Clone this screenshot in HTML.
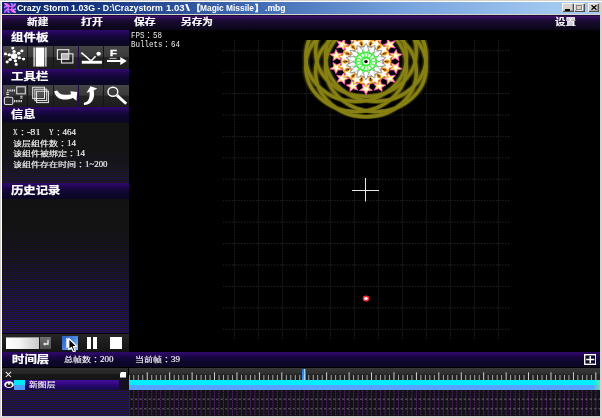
<!DOCTYPE html>
<html lang="zh"><head><meta charset="utf-8"><title>Crazy Storm 1.03G</title>
<style>
html,body{margin:0;padding:0;background:#000;}
body{width:602px;height:418px;overflow:hidden;position:relative;}
#w{position:absolute;left:0;top:0;width:602px;height:418px;overflow:hidden;}
.t{position:absolute;white-space:pre;transform-origin:0 0;display:block;}
</style></head><body><div id="w">
<div style="position:absolute;left:0px;top:0px;width:602px;height:418px;background:#d6d3ce;"></div>
<div style="position:absolute;left:0px;top:1px;width:602px;height:1px;background:#ffffff;"></div>
<div style="position:absolute;left:0.8px;top:1px;width:1.2px;height:416px;background:#ffffff;"></div>
<div style="position:absolute;left:2px;top:2px;width:598px;height:11.5px;background:linear-gradient(90deg,#0a246a 0%,#12307a 12%,#3f6ab2 42%,#78a4de 68%,#a2c8f0 92%,#a6caf0 100%);"></div>
<div style="position:absolute;left:2px;top:14.5px;width:598px;height:401.5px;background:#000;"></div>
<svg style="position:absolute;left:3.6px;top:3px" width="12.4" height="10" viewBox="0 0 16 16" preserveAspectRatio="none">
<rect width="16" height="16" fill="#2c2a9c"/>
<g fill="none" stroke-linecap="round">
<path d="M8 8 C5 5 2 5 0.5 7" stroke="#c070ff" stroke-width="2.4"/>
<path d="M8 8 C7 4 4 2 1.5 1" stroke="#ff60e8" stroke-width="2.6"/>
<path d="M8 8 C11 5 11 2 9.5 0.5" stroke="#8f7cff" stroke-width="2.4"/>
<path d="M8 8 C12 7 14 4 15 1.5" stroke="#e458f0" stroke-width="2.4"/>
<path d="M8 8 C11 11 14 11 15.5 9" stroke="#b884ff" stroke-width="2.4"/>
<path d="M8 8 C9 12 12 14 14.5 15" stroke="#ff60e8" stroke-width="2.6"/>
<path d="M8 8 C5 11 5 14 6.5 15.5" stroke="#8f7cff" stroke-width="2.4"/>
<path d="M8 8 C4 9 2 12 1 14.5" stroke="#d860f0" stroke-width="2.4"/>
<path d="M2 2.5 L4 4.5 M12 12 L14 13.5 M12.5 3 L13.5 2" stroke="#ffffff" stroke-width="1.2" opacity=".75"/>
</g>
<circle cx="8" cy="8" r="1.5" fill="#241070"/>
</svg>
<span id="ti1" class="t" style="left:17.4px;top:2.9px;font:bold 8.5px/11.5px 'Liberation Sans','Noto Sans CJK SC',sans-serif;color:#fff;transform:scale(1.0322,1.0000);">Crazy Storm 1.03G - D:\Crazystorm</span>
<span id="ti2" class="t" style="left:166.0px;top:2.9px;font:bold 8.5px/11.5px 'Liberation Sans','Noto Sans CJK SC',sans-serif;color:#fff;transform:scale(1.1241,1.0000);">1.03</span>
<span id="ti2b" class="t" style="left:184.7px;top:2.9px;font:bold 8.5px/11.5px 'Liberation Sans','Noto Sans CJK SC',sans-serif;color:#fff;transform:scale(2.1895,1.0000);">\</span>
<span id="ti3" class="t" style="left:191.8px;top:2.9px;font:bold 8.5px/11.5px 'Liberation Sans','Noto Sans CJK SC',sans-serif;color:#fff;transform:scale(0.9629,1.0000);-webkit-text-stroke:0.5px #fff;">【</span>
<span id="ti4" class="t" style="left:200.4px;top:2.9px;font:bold 8.5px/11.5px 'Liberation Sans','Noto Sans CJK SC',sans-serif;color:#fff;transform:scale(0.9852,1.0000);">Magic Missile</span>
<span id="ti5" class="t" style="left:254.5px;top:2.9px;font:bold 8.5px/11.5px 'Liberation Sans','Noto Sans CJK SC',sans-serif;color:#fff;transform:scale(0.9629,1.0000);-webkit-text-stroke:0.5px #fff;">】</span>
<span id="ti6" class="t" style="left:265.4px;top:2.9px;font:bold 8.5px/11.5px 'Liberation Sans','Noto Sans CJK SC',sans-serif;color:#fff;transform:scale(1.0142,1.0000);">.mbg</span>
<div style="position:absolute;left:562.3px;top:3.2px;width:11.3px;height:9.3px;background:#d6d3ce;box-shadow:inset 0.8px 0.8px 0 #fff, inset -0.8px -0.8px 0 #404040, inset -1.6px -1.6px 0 #808080;"><div style="position:absolute;left:3px;top:6px;width:4.5px;height:1.4px;background:#000"></div></div>
<div style="position:absolute;left:573.8px;top:3.2px;width:11.3px;height:9.3px;background:#d6d3ce;box-shadow:inset 0.8px 0.8px 0 #fff, inset -0.8px -0.8px 0 #404040, inset -1.6px -1.6px 0 #808080;"><div style="position:absolute;left:2.6px;top:2px;width:5.6px;height:4.6px;border:0.8px solid #8a8782;border-top-width:1.5px;box-sizing:border-box;box-shadow:0.7px 0.7px 0 #fff"></div></div>
<div style="position:absolute;left:587.8px;top:3.2px;width:11.3px;height:9.3px;background:#d6d3ce;box-shadow:inset 0.8px 0.8px 0 #fff, inset -0.8px -0.8px 0 #404040, inset -1.6px -1.6px 0 #808080;"><svg style="position:absolute;left:2.8px;top:2.2px" width="6" height="5" viewBox="0 0 6 5"><path d="M0.5 0.3 L5.5 4.7 M5.5 0.3 L0.5 4.7" stroke="#000" stroke-width="1.3"/></svg></div>
<div style="position:absolute;left:2px;top:14.5px;width:598px;height:15px;background:linear-gradient(180deg,#000 0%,#3a1266 6%,#35105e 18%,#1c0c3a 40%,#120a28 70%,#0c0818 100%);"></div>
<div style="position:absolute;left:2px;top:17px;width:598px;height:12.5px;background-image:repeating-conic-gradient(rgba(0,0,0,.28) 0% 25%, rgba(0,0,0,0) 0% 50%);background-size:2px 2px;opacity:0.8;"></div>
<span id="m1" class="t" style="left:27px;top:16.6px;font:bold 11px/13px 'Liberation Sans','Noto Sans CJK SC',sans-serif;color:#fbfbfb;transform:scale(0.9682,0.8000);-webkit-text-stroke:0.25px #fbfbfb;">新建</span>
<span id="m2" class="t" style="left:81px;top:16.6px;font:bold 11px/13px 'Liberation Sans','Noto Sans CJK SC',sans-serif;color:#fbfbfb;transform:scale(0.9909,0.8000);-webkit-text-stroke:0.25px #fbfbfb;">打开</span>
<span id="m3" class="t" style="left:133.6px;top:16.6px;font:bold 11px/13px 'Liberation Sans','Noto Sans CJK SC',sans-serif;color:#fbfbfb;transform:scale(0.9818,0.8000);-webkit-text-stroke:0.25px #fbfbfb;">保存</span>
<span id="m4" class="t" style="left:181.4px;top:16.6px;font:bold 11px/13px 'Liberation Sans','Noto Sans CJK SC',sans-serif;color:#fbfbfb;transform:scale(0.9697,0.8000);-webkit-text-stroke:0.25px #fbfbfb;">另存为</span>
<span id="m5" class="t" style="left:555.4px;top:16.6px;font:bold 11px/13px 'Liberation Sans','Noto Sans CJK SC',sans-serif;color:#fbfbfb;transform:scale(0.9455,0.8000);-webkit-text-stroke:0.25px #fbfbfb;">设置</span>
<div style="position:absolute;left:2px;top:29.5px;width:127px;height:322px;background:#100a20;"></div>
<div style="position:absolute;left:2px;top:29.6px;width:127px;height:16.3px;background:linear-gradient(180deg,#2e086a 0%,#26085a 20%,#170842 42%,#0f0832 66%,#0a0826 100%);"></div>
<div style="position:absolute;left:2px;top:32.6px;width:127px;height:13.3px;background-image:repeating-conic-gradient(rgba(0,0,0,.28) 0% 25%, rgba(0,0,0,0) 0% 50%);background-size:2px 2px;opacity:0.7;"></div>
<span id="h1" class="t" style="left:11px;top:33.0px;font:bold 12.5px/13px 'Liberation Sans','Noto Sans CJK SC',sans-serif;color:#fff;transform:scale(0.9969,0.8100);-webkit-text-stroke:0.3px #fff;">组件板</span>
<div style="position:absolute;left:2px;top:68.6px;width:127px;height:16px;background:linear-gradient(180deg,#2e086a 0%,#26085a 20%,#170842 42%,#0f0832 66%,#0a0826 100%);"></div>
<div style="position:absolute;left:2px;top:71.6px;width:127px;height:13px;background-image:repeating-conic-gradient(rgba(0,0,0,.28) 0% 25%, rgba(0,0,0,0) 0% 50%);background-size:2px 2px;opacity:0.7;"></div>
<span id="h2" class="t" style="left:11px;top:72.0px;font:bold 12.5px/13px 'Liberation Sans','Noto Sans CJK SC',sans-serif;color:#fff;transform:scale(0.9969,0.8100);-webkit-text-stroke:0.3px #fff;">工具栏</span>
<div style="position:absolute;left:2px;top:106.7px;width:127px;height:15.8px;background:linear-gradient(180deg,#2e086a 0%,#26085a 20%,#170842 42%,#0f0832 66%,#0a0826 100%);"></div>
<div style="position:absolute;left:2px;top:109.7px;width:127px;height:12.8px;background-image:repeating-conic-gradient(rgba(0,0,0,.28) 0% 25%, rgba(0,0,0,0) 0% 50%);background-size:2px 2px;opacity:0.7;"></div>
<span id="h3" class="t" style="left:11px;top:110.10000000000001px;font:bold 12.5px/13px 'Liberation Sans','Noto Sans CJK SC',sans-serif;color:#fff;transform:scale(0.9834,0.8100);-webkit-text-stroke:0.3px #fff;">信息</span>
<div style="position:absolute;left:2px;top:182.8px;width:127px;height:15.8px;background:linear-gradient(180deg,#2e086a 0%,#26085a 20%,#170842 42%,#0f0832 66%,#0a0826 100%);"></div>
<div style="position:absolute;left:2px;top:185.8px;width:127px;height:12.8px;background-image:repeating-conic-gradient(rgba(0,0,0,.28) 0% 25%, rgba(0,0,0,0) 0% 50%);background-size:2px 2px;opacity:0.7;"></div>
<span id="h4" class="t" style="left:11px;top:186.20000000000002px;font:bold 12.5px/13px 'Liberation Sans','Noto Sans CJK SC',sans-serif;color:#fff;transform:scale(0.9897,0.8100);-webkit-text-stroke:0.3px #fff;">历史记录</span>
<div style="position:absolute;left:2px;top:45.9px;width:127px;height:22.7px;background:#1e0848;"></div>
<div style="position:absolute;left:2.5px;top:45.9px;width:24.900000000000002px;height:22.7px;background:linear-gradient(180deg,#454545 0%,#3a3a3a 46%,#242424 50%,#1c1c1c 100%);"></div>
<div style="position:absolute;left:28.400000000000002px;top:45.9px;width:24.3px;height:22.7px;background:linear-gradient(180deg,#454545 0%,#3a3a3a 46%,#242424 50%,#1c1c1c 100%);"></div>
<div style="position:absolute;left:53.7px;top:45.9px;width:24.299999999999997px;height:22.7px;background:linear-gradient(180deg,#454545 0%,#3a3a3a 46%,#242424 50%,#1c1c1c 100%);"></div>
<div style="position:absolute;left:79.0px;top:45.9px;width:24.299999999999997px;height:22.7px;background:linear-gradient(180deg,#454545 0%,#3a3a3a 46%,#242424 50%,#1c1c1c 100%);"></div>
<div style="position:absolute;left:104.3px;top:45.9px;width:24.299999999999997px;height:22.7px;background:linear-gradient(180deg,#454545 0%,#3a3a3a 46%,#242424 50%,#1c1c1c 100%);"></div>
<div style="position:absolute;left:2px;top:84.6px;width:127px;height:22.1px;background:#1e0848;"></div>
<div style="position:absolute;left:2.5px;top:84.6px;width:24.900000000000002px;height:22.1px;background:linear-gradient(180deg,#454545 0%,#3a3a3a 46%,#242424 50%,#1c1c1c 100%);"></div>
<div style="position:absolute;left:28.400000000000002px;top:84.6px;width:24.3px;height:22.1px;background:linear-gradient(180deg,#454545 0%,#3a3a3a 46%,#242424 50%,#1c1c1c 100%);"></div>
<div style="position:absolute;left:53.7px;top:84.6px;width:24.299999999999997px;height:22.1px;background:linear-gradient(180deg,#454545 0%,#3a3a3a 46%,#242424 50%,#1c1c1c 100%);"></div>
<div style="position:absolute;left:79.0px;top:84.6px;width:24.299999999999997px;height:22.1px;background:linear-gradient(180deg,#454545 0%,#3a3a3a 46%,#242424 50%,#1c1c1c 100%);"></div>
<div style="position:absolute;left:104.3px;top:84.6px;width:24.299999999999997px;height:22.1px;background:linear-gradient(180deg,#454545 0%,#3a3a3a 46%,#242424 50%,#1c1c1c 100%);"></div>
<svg style="position:absolute;left:0;top:0" width="130" height="110" viewBox="0 0 130 110"><line x1="14.1" y1="56.1" x2="12.8" y2="48.1" stroke="#bdbdbd" stroke-width="0.7" opacity=".7"/><line x1="14.1" y1="56.1" x2="21.9" y2="50.9" stroke="#bdbdbd" stroke-width="0.7" opacity=".7"/><line x1="14.1" y1="56.1" x2="23.6" y2="59.1" stroke="#bdbdbd" stroke-width="0.7" opacity=".7"/><line x1="14.1" y1="56.1" x2="16.2" y2="64.5" stroke="#bdbdbd" stroke-width="0.7" opacity=".7"/><line x1="14.1" y1="56.1" x2="7.2" y2="62.0" stroke="#bdbdbd" stroke-width="0.7" opacity=".7"/><line x1="14.1" y1="56.1" x2="5.5" y2="53.9" stroke="#bdbdbd" stroke-width="0.7" opacity=".7"/><ellipse cx="14.1" cy="51.6" rx="1.7" ry="1.5" fill="#fff"/><ellipse cx="12.8" cy="48.1" rx="1.6" ry="1.4" fill="#fff"/><ellipse cx="18.8" cy="53.3" rx="1.7" ry="1.5" fill="#fff"/><ellipse cx="21.9" cy="50.9" rx="1.6" ry="1.4" fill="#fff"/><ellipse cx="19.3" cy="57.8" rx="1.7" ry="1.5" fill="#fff"/><ellipse cx="23.6" cy="59.1" rx="1.6" ry="1.4" fill="#fff"/><ellipse cx="15.4" cy="60.8" rx="1.7" ry="1.5" fill="#fff"/><ellipse cx="16.2" cy="64.5" rx="1.6" ry="1.4" fill="#fff"/><ellipse cx="10.2" cy="59.4" rx="1.7" ry="1.5" fill="#fff"/><ellipse cx="7.2" cy="62.0" rx="1.6" ry="1.4" fill="#fff"/><ellipse cx="9.3" cy="54.8" rx="1.7" ry="1.5" fill="#fff"/><ellipse cx="5.5" cy="53.9" rx="1.6" ry="1.4" fill="#fff"/><ellipse cx="14.1" cy="56.1" rx="3.2" ry="2.9" fill="#fff"/><rect x="35.7" y="47.5" width="8.6" height="19.1" fill="#fff"/><rect x="33.5" y="47.5" width="1.2" height="19.1" fill="#fff"/><rect x="45.3" y="47.5" width="1.2" height="19.1" fill="#fff"/><rect x="61" y="53.3" width="7.8" height="6" fill="#b4b4b4"/><rect x="57.4" y="49.7" width="11.4" height="9.6" fill="none" stroke="#e8e8e8" stroke-width="1.1"/><rect x="61.5" y="53.8" width="11.4" height="9.2" fill="none" stroke="#e8e8e8" stroke-width="1.1"/><rect x="81.8" y="60.8" width="20.1" height="2.9" fill="#fff"/><path d="M81.3 52.6 L91 60.9 L95.6 56.2" fill="none" stroke="#fff" stroke-width="1.5" stroke-linejoin="miter"/><ellipse cx="98.6" cy="53.7" rx="2.2" ry="2" fill="#fff"/><rect x="109.4" y="57.9" width="7.2" height="0.9" fill="#d4d4d4"/><path d="M107 59.9 H120.3 V57 L126.8 60.9 L120.3 64.9 V61.9 H107 Z" fill="#fff"/><rect x="16.7" y="86.8" width="8.6" height="7" fill="#3c3c3c" stroke="#d8d8d8" stroke-width="1.1"/><rect x="4.4" y="97.2" width="8.4" height="7.3" rx="1.2" fill="#303030" stroke="#d8d8d8" stroke-width="1.1"/><path d="M7.2 90.5 H15" stroke="#e6e6e6" stroke-width="2.2" stroke-dasharray="1.3 0.9" fill="none"/><path d="M7.6 92.3 V96.4" stroke="#e6e6e6" stroke-width="2.4" stroke-dasharray="1 0.8" fill="none"/><path d="M14 101.2 H22.4" stroke="#e6e6e6" stroke-width="2.2" stroke-dasharray="1.3 0.9" fill="none"/><path d="M21.4 95.8 V99.4" stroke="#e6e6e6" stroke-width="2.4" stroke-dasharray="1 0.8" fill="none"/><rect x="36.6" y="91" width="7.8" height="6.6" fill="#5a5a5a" opacity=".8"/><rect x="32.7" y="87.2" width="11.8" height="11.4" fill="none" stroke="#ececec" stroke-width="1"/><rect x="34.9" y="89.2" width="11.8" height="11.4" fill="none" stroke="#ececec" stroke-width="1"/><rect x="36.6" y="91.2" width="11.8" height="11.4" fill="none" stroke="#ececec" stroke-width="1"/><path d="M54.3 91.2 L57.4 90.4 C58.6 94 63.5 95.8 71 94.3 L70.4 91.3 L77.1 92 L76.5 100.7 L72.9 98.1 C63.5 101.6 55.4 98.9 54.3 91.2 Z" fill="#fff"/><path d="M83.9 102.7 C88.3 102.2 90 98 89.6 92 L86.5 92.8 L90.6 86.2 L97.3 88.6 L93.7 90.6 C95.5 99.4 91 105.1 83.9 105.1 Z" fill="#fff"/><ellipse cx="112.9" cy="91.7" rx="4.9" ry="4.5" fill="none" stroke="#fff" stroke-width="1.4"/><path d="M117 95.4 L126.2 103.8" stroke="#fff" stroke-width="2.9" stroke-linecap="butt"/></svg>
<span id="ficon" class="t" style="left:109.5px;top:47.7px;font:bold 10.6px/11px 'Liberation Sans','Noto Sans CJK SC',sans-serif;color:#fff;transform:scale(1.0641,0.9400);-webkit-text-stroke:0.4px #fff;">F</span>
<div style="position:absolute;left:2px;top:122.5px;width:127px;height:60.3px;background:linear-gradient(180deg,#131313 0%,#151515 60%,#1a1a1a 100%);"></div>
<div style="position:absolute;left:2px;top:150px;width:127px;height:32.8px;background-image:repeating-conic-gradient(#280a7c 0% 25%, rgba(0,0,0,0) 0% 50%);background-size:2px 2px;opacity:0.6;-webkit-mask-image:linear-gradient(180deg,rgba(0,0,0,0) 0%,rgba(0,0,0,.25) 50%,rgba(0,0,0,.8) 100%);mask-image:linear-gradient(180deg,rgba(0,0,0,0) 0%,rgba(0,0,0,.25) 50%,rgba(0,0,0,.8) 100%);"></div>
<div style="position:absolute;left:2px;top:198.7px;width:127px;height:134.5px;background:linear-gradient(180deg,#121212 0%,#141414 40%,#1b1b1b 100%);"></div>
<div style="position:absolute;left:2px;top:225px;width:127px;height:108.2px;background-image:repeating-conic-gradient(#2a0a84 0% 25%, rgba(0,0,0,0) 0% 50%);background-size:2px 2px;opacity:0.8;-webkit-mask-image:linear-gradient(180deg,rgba(0,0,0,0) 0%,rgba(0,0,0,.3) 35%,rgba(0,0,0,.75) 70%,rgba(0,0,0,1) 100%);mask-image:linear-gradient(180deg,rgba(0,0,0,0) 0%,rgba(0,0,0,.3) 35%,rgba(0,0,0,.75) 70%,rgba(0,0,0,1) 100%);"></div>
<div style="position:absolute;left:2px;top:333.2px;width:127px;height:1.3px;background:#050505;"></div>
<span id="i1_0" class="t" style="left:13px;top:128.4px;font:normal 9px/10.5px 'Liberation Serif','Noto Sans CJK SC',sans-serif;color:#f0f0f0;transform:scale(0.6923,0.8200);-webkit-text-stroke:0.2px #f0f0f0;">X</span>
<span id="i1_1" class="t" style="left:17.5px;top:128.4px;font:normal 9px/10.5px 'Liberation Serif','Noto Sans CJK SC',sans-serif;color:#f0f0f0;transform:scale(0.9983,0.8200);-webkit-text-stroke:0.2px #f0f0f0;"><span lang="ja" style="font-family:'Noto Sans CJK JP',sans-serif">：</span></span>
<span id="i1_2" class="t" style="left:26.5px;top:128.4px;font:normal 9px/10.5px 'Liberation Serif','Noto Sans CJK SC',sans-serif;color:#f0f0f0;transform:scale(1.1250,0.8200);-webkit-text-stroke:0.2px #f0f0f0;">-81</span>
<span id="i1_3" class="t" style="left:40.0px;top:128.4px;font:normal 9px/10.5px 'Liberation Serif','Noto Sans CJK SC',sans-serif;color:#f0f0f0;transform:scale(1.0000,0.8200);-webkit-text-stroke:0.2px #f0f0f0;"></span>
<span id="i1_4" class="t" style="left:49.0px;top:128.4px;font:normal 9px/10.5px 'Liberation Serif','Noto Sans CJK SC',sans-serif;color:#f0f0f0;transform:scale(0.6923,0.8200);-webkit-text-stroke:0.2px #f0f0f0;">Y</span>
<span id="i1_5" class="t" style="left:53.5px;top:128.4px;font:normal 9px/10.5px 'Liberation Serif','Noto Sans CJK SC',sans-serif;color:#f0f0f0;transform:scale(0.9983,0.8200);-webkit-text-stroke:0.2px #f0f0f0;"><span lang="ja" style="font-family:'Noto Sans CJK JP',sans-serif">：</span></span>
<span id="i1_6" class="t" style="left:62.5px;top:128.4px;font:normal 9px/10.5px 'Liberation Serif','Noto Sans CJK SC',sans-serif;color:#f0f0f0;transform:scale(1.0000,0.8200);-webkit-text-stroke:0.2px #f0f0f0;">464</span>
<span id="i2_0" class="t" style="left:13px;top:138.9px;font:normal 9px/10.5px 'Liberation Serif','Noto Sans CJK SC',sans-serif;color:#f0f0f0;transform:scale(0.9994,0.8200);-webkit-text-stroke:0.2px #f0f0f0;">该层组件数<span lang="ja" style="font-family:'Noto Sans CJK JP',sans-serif">：</span></span>
<span id="i2_1" class="t" style="left:67px;top:138.9px;font:normal 9px/10.5px 'Liberation Serif','Noto Sans CJK SC',sans-serif;color:#f0f0f0;transform:scale(1.0000,0.8200);-webkit-text-stroke:0.2px #f0f0f0;">14</span>
<span id="i3_0" class="t" style="left:13px;top:149.4px;font:normal 9px/10.5px 'Liberation Serif','Noto Sans CJK SC',sans-serif;color:#f0f0f0;transform:scale(0.9995,0.8200);-webkit-text-stroke:0.2px #f0f0f0;">该组件被绑定<span lang="ja" style="font-family:'Noto Sans CJK JP',sans-serif">：</span></span>
<span id="i3_1" class="t" style="left:76px;top:149.4px;font:normal 9px/10.5px 'Liberation Serif','Noto Sans CJK SC',sans-serif;color:#f0f0f0;transform:scale(1.0000,0.8200);-webkit-text-stroke:0.2px #f0f0f0;">14</span>
<span id="i4_0" class="t" style="left:13px;top:159.9px;font:normal 9px/10.5px 'Liberation Serif','Noto Sans CJK SC',sans-serif;color:#f0f0f0;transform:scale(0.9996,0.8200);-webkit-text-stroke:0.2px #f0f0f0;">该组件存在时间<span lang="ja" style="font-family:'Noto Sans CJK JP',sans-serif">：</span></span>
<span id="i4_1" class="t" style="left:85px;top:159.9px;font:normal 9px/10.5px 'Liberation Serif','Noto Sans CJK SC',sans-serif;color:#f0f0f0;transform:scale(0.9836,0.8200);-webkit-text-stroke:0.2px #f0f0f0;">1~200</span>
<div style="position:absolute;left:2px;top:334px;width:127px;height:18px;background:linear-gradient(180deg,#262626 0%,#1c1c1c 50%,#141414 100%);"></div>
<div style="position:absolute;left:5.8px;top:336.5px;width:33.4px;height:12px;background:linear-gradient(90deg,#ffffff 0%,#f4f4f4 40%,#c8c8c8 100%);box-shadow:inset 0 1px 0 #9a9a9a;"></div>
<div style="position:absolute;left:39.6px;top:336.5px;width:11.6px;height:12px;background:linear-gradient(180deg,#707070,#505050);"></div>
<svg style="position:absolute;left:41.5px;top:339px" width="8" height="8" viewBox="0 0 8 8"><path d="M6 0.8 V5 H2" fill="none" stroke="#f0f0f0" stroke-width="1.3"/><path d="M3.2 3.2 L1 5 L3.2 6.8 Z" fill="#f0f0f0"/></svg>
<div style="position:absolute;left:61.6px;top:336.3px;width:16.6px;height:13.8px;background:linear-gradient(135deg,#2a5cc8 0%,#4a86e0 50%,#9cc8f8 100%);"></div>
<svg style="position:absolute;left:61.6px;top:336.3px" width="19" height="18" viewBox="0 0 19 18"><path d="M4.3 1.8 L12.5 7 L4.3 12.2 Z" fill="#fff"/><path d="M6.8 2.5 L6.8 13.6 L9.4 11.4 L11.4 15.8 L13.4 14.9 L11.4 10.6 L14.8 10.4 Z" fill="#0a0a0a" stroke="#fff" stroke-width="1.2" stroke-linejoin="round"/></svg>
<div style="position:absolute;left:87.2px;top:337px;width:4.2px;height:12.2px;background:#fff;"></div>
<div style="position:absolute;left:93.1px;top:337px;width:4.2px;height:12.2px;background:#fff;"></div>
<div style="position:absolute;left:109.8px;top:337px;width:12.3px;height:12.2px;background:#fff;"></div>
<div style="position:absolute;left:2px;top:351.7px;width:598px;height:15.8px;background:linear-gradient(180deg,#2e086a 0%,#26085a 20%,#170842 42%,#0f0832 66%,#0a0826 100%);"></div>
<div style="position:absolute;left:2px;top:354.7px;width:598px;height:12.8px;background-image:repeating-conic-gradient(rgba(0,0,0,.28) 0% 25%, rgba(0,0,0,0) 0% 50%);background-size:2px 2px;opacity:0.7;"></div>
<span id="h5" class="t" style="left:11.7px;top:355.09999999999997px;font:bold 12.5px/13px 'Liberation Sans','Noto Sans CJK SC',sans-serif;color:#fff;transform:scale(0.9916,0.8100);-webkit-text-stroke:0.3px #fff;">时间层</span>
<span id="t1" class="t" style="left:63.6px;top:354.7px;font:normal 9px/10.5px 'Liberation Serif','Noto Sans CJK SC',sans-serif;color:#f0f0f0;transform:scale(0.9974,0.8200);-webkit-text-stroke:0.2px #f0f0f0;">总帧数<span lang="ja" style="font-family:'Noto Sans CJK JP',sans-serif">：</span>200</span>
<span id="t2" class="t" style="left:135px;top:354.7px;font:normal 9px/10.5px 'Liberation Serif','Noto Sans CJK SC',sans-serif;color:#f0f0f0;transform:scale(0.9993,0.8200);-webkit-text-stroke:0.2px #f0f0f0;">当前帧<span lang="ja" style="font-family:'Noto Sans CJK JP',sans-serif">：</span>39</span>
<svg style="position:absolute;left:583.5px;top:353.8px" width="12.5" height="11" viewBox="0 0 12.5 11"><rect x="0.7" y="0.7" width="11.1" height="9.6" fill="#0c0a2c" stroke="#fff" stroke-width="1.4"/><path d="M6.25 2 V9 M2.2 5.5 H10.3" stroke="#fff" stroke-width="1.5"/></svg>
<div style="position:absolute;left:2px;top:368px;width:126px;height:12px;background:linear-gradient(180deg,#2e2e2e 0%,#262626 48%,#181818 52%,#141414 100%);"></div>
<div style="position:absolute;left:128px;top:368px;width:1px;height:12px;background:#000;"></div>
<div style="position:absolute;left:129px;top:368px;width:471px;height:12px;background:linear-gradient(180deg,#383838 0%,#303030 45%,#242424 55%,#202020 100%);"></div>
<svg style="position:absolute;left:5px;top:370.6px" width="7" height="7" viewBox="0 0 7 7"><path d="M0.8 0.8 L6 6 M6 0.8 L0.8 6" stroke="#f4f4f4" stroke-width="1.05"/></svg>
<svg style="position:absolute;left:120.3px;top:371.6px" width="6" height="6" viewBox="0 0 6 6"><path d="M1.2 0 H6 V5.6 H0 V1.2 Z" fill="#fff"/></svg>
<svg style="position:absolute;left:129px;top:368px" width="471" height="12" viewBox="0 0 471 12" shape-rendering="auto"><rect x="-0.15" y="7" width="0.9" height="5" fill="#b4b4b4"/><rect x="4.34" y="7" width="0.9" height="5" fill="#b4b4b4"/><rect x="8.82" y="7" width="0.9" height="5" fill="#b4b4b4"/><rect x="13.31" y="7" width="0.9" height="5" fill="#b4b4b4"/><rect x="17.79" y="4.4" width="0.9" height="7.6" fill="#e4e4e4"/><rect x="22.28" y="7" width="0.9" height="5" fill="#b4b4b4"/><rect x="26.77" y="7" width="0.9" height="5" fill="#b4b4b4"/><rect x="31.25" y="7" width="0.9" height="5" fill="#b4b4b4"/><rect x="35.74" y="7" width="0.9" height="5" fill="#b4b4b4"/><rect x="40.22" y="4.4" width="0.9" height="7.6" fill="#e4e4e4"/><rect x="44.71" y="7" width="0.9" height="5" fill="#b4b4b4"/><rect x="49.20" y="7" width="0.9" height="5" fill="#b4b4b4"/><rect x="53.68" y="7" width="0.9" height="5" fill="#b4b4b4"/><rect x="58.17" y="7" width="0.9" height="5" fill="#b4b4b4"/><rect x="62.65" y="4.4" width="0.9" height="7.6" fill="#e4e4e4"/><rect x="67.14" y="7" width="0.9" height="5" fill="#b4b4b4"/><rect x="71.63" y="7" width="0.9" height="5" fill="#b4b4b4"/><rect x="76.11" y="7" width="0.9" height="5" fill="#b4b4b4"/><rect x="80.60" y="7" width="0.9" height="5" fill="#b4b4b4"/><rect x="85.08" y="4.4" width="0.9" height="7.6" fill="#e4e4e4"/><rect x="89.57" y="7" width="0.9" height="5" fill="#b4b4b4"/><rect x="94.06" y="7" width="0.9" height="5" fill="#b4b4b4"/><rect x="98.54" y="7" width="0.9" height="5" fill="#b4b4b4"/><rect x="103.03" y="7" width="0.9" height="5" fill="#b4b4b4"/><rect x="107.51" y="4.4" width="0.9" height="7.6" fill="#e4e4e4"/><rect x="112.00" y="7" width="0.9" height="5" fill="#b4b4b4"/><rect x="116.49" y="7" width="0.9" height="5" fill="#b4b4b4"/><rect x="120.97" y="7" width="0.9" height="5" fill="#b4b4b4"/><rect x="125.46" y="7" width="0.9" height="5" fill="#b4b4b4"/><rect x="129.94" y="4.4" width="0.9" height="7.6" fill="#e4e4e4"/><rect x="134.43" y="7" width="0.9" height="5" fill="#b4b4b4"/><rect x="138.92" y="7" width="0.9" height="5" fill="#b4b4b4"/><rect x="143.40" y="7" width="0.9" height="5" fill="#b4b4b4"/><rect x="147.89" y="7" width="0.9" height="5" fill="#b4b4b4"/><rect x="152.37" y="4.4" width="0.9" height="7.6" fill="#e4e4e4"/><rect x="156.86" y="7" width="0.9" height="5" fill="#b4b4b4"/><rect x="161.35" y="7" width="0.9" height="5" fill="#b4b4b4"/><rect x="165.83" y="7" width="0.9" height="5" fill="#b4b4b4"/><rect x="170.32" y="7" width="0.9" height="5" fill="#b4b4b4"/><rect x="174.80" y="4.4" width="0.9" height="7.6" fill="#e4e4e4"/><rect x="179.29" y="7" width="0.9" height="5" fill="#b4b4b4"/><rect x="183.78" y="7" width="0.9" height="5" fill="#b4b4b4"/><rect x="188.26" y="7" width="0.9" height="5" fill="#b4b4b4"/><rect x="192.75" y="7" width="0.9" height="5" fill="#b4b4b4"/><rect x="197.23" y="4.4" width="0.9" height="7.6" fill="#e4e4e4"/><rect x="201.72" y="7" width="0.9" height="5" fill="#b4b4b4"/><rect x="206.21" y="7" width="0.9" height="5" fill="#b4b4b4"/><rect x="210.69" y="7" width="0.9" height="5" fill="#b4b4b4"/><rect x="215.18" y="7" width="0.9" height="5" fill="#b4b4b4"/><rect x="219.66" y="4.4" width="0.9" height="7.6" fill="#e4e4e4"/><rect x="224.15" y="7" width="0.9" height="5" fill="#b4b4b4"/><rect x="228.64" y="7" width="0.9" height="5" fill="#b4b4b4"/><rect x="233.12" y="7" width="0.9" height="5" fill="#b4b4b4"/><rect x="237.61" y="7" width="0.9" height="5" fill="#b4b4b4"/><rect x="242.09" y="4.4" width="0.9" height="7.6" fill="#e4e4e4"/><rect x="246.58" y="7" width="0.9" height="5" fill="#b4b4b4"/><rect x="251.07" y="7" width="0.9" height="5" fill="#b4b4b4"/><rect x="255.55" y="7" width="0.9" height="5" fill="#b4b4b4"/><rect x="260.04" y="7" width="0.9" height="5" fill="#b4b4b4"/><rect x="264.52" y="4.4" width="0.9" height="7.6" fill="#e4e4e4"/><rect x="269.01" y="7" width="0.9" height="5" fill="#b4b4b4"/><rect x="273.50" y="7" width="0.9" height="5" fill="#b4b4b4"/><rect x="277.98" y="7" width="0.9" height="5" fill="#b4b4b4"/><rect x="282.47" y="7" width="0.9" height="5" fill="#b4b4b4"/><rect x="286.95" y="4.4" width="0.9" height="7.6" fill="#e4e4e4"/><rect x="291.44" y="7" width="0.9" height="5" fill="#b4b4b4"/><rect x="295.93" y="7" width="0.9" height="5" fill="#b4b4b4"/><rect x="300.41" y="7" width="0.9" height="5" fill="#b4b4b4"/><rect x="304.90" y="7" width="0.9" height="5" fill="#b4b4b4"/><rect x="309.38" y="4.4" width="0.9" height="7.6" fill="#e4e4e4"/><rect x="313.87" y="7" width="0.9" height="5" fill="#b4b4b4"/><rect x="318.36" y="7" width="0.9" height="5" fill="#b4b4b4"/><rect x="322.84" y="7" width="0.9" height="5" fill="#b4b4b4"/><rect x="327.33" y="7" width="0.9" height="5" fill="#b4b4b4"/><rect x="331.81" y="4.4" width="0.9" height="7.6" fill="#e4e4e4"/><rect x="336.30" y="7" width="0.9" height="5" fill="#b4b4b4"/><rect x="340.79" y="7" width="0.9" height="5" fill="#b4b4b4"/><rect x="345.27" y="7" width="0.9" height="5" fill="#b4b4b4"/><rect x="349.76" y="7" width="0.9" height="5" fill="#b4b4b4"/><rect x="354.24" y="4.4" width="0.9" height="7.6" fill="#e4e4e4"/><rect x="358.73" y="7" width="0.9" height="5" fill="#b4b4b4"/><rect x="363.22" y="7" width="0.9" height="5" fill="#b4b4b4"/><rect x="367.70" y="7" width="0.9" height="5" fill="#b4b4b4"/><rect x="372.19" y="7" width="0.9" height="5" fill="#b4b4b4"/><rect x="376.67" y="4.4" width="0.9" height="7.6" fill="#e4e4e4"/><rect x="381.16" y="7" width="0.9" height="5" fill="#b4b4b4"/><rect x="385.65" y="7" width="0.9" height="5" fill="#b4b4b4"/><rect x="390.13" y="7" width="0.9" height="5" fill="#b4b4b4"/><rect x="394.62" y="7" width="0.9" height="5" fill="#b4b4b4"/><rect x="399.10" y="4.4" width="0.9" height="7.6" fill="#e4e4e4"/><rect x="403.59" y="7" width="0.9" height="5" fill="#b4b4b4"/><rect x="408.08" y="7" width="0.9" height="5" fill="#b4b4b4"/><rect x="412.56" y="7" width="0.9" height="5" fill="#b4b4b4"/><rect x="417.05" y="7" width="0.9" height="5" fill="#b4b4b4"/><rect x="421.53" y="4.4" width="0.9" height="7.6" fill="#e4e4e4"/><rect x="426.02" y="7" width="0.9" height="5" fill="#b4b4b4"/><rect x="430.51" y="7" width="0.9" height="5" fill="#b4b4b4"/><rect x="434.99" y="7" width="0.9" height="5" fill="#b4b4b4"/><rect x="439.48" y="7" width="0.9" height="5" fill="#b4b4b4"/><rect x="443.96" y="4.4" width="0.9" height="7.6" fill="#e4e4e4"/><rect x="448.45" y="7" width="0.9" height="5" fill="#b4b4b4"/><rect x="452.94" y="7" width="0.9" height="5" fill="#b4b4b4"/><rect x="457.42" y="7" width="0.9" height="5" fill="#b4b4b4"/><rect x="461.91" y="7" width="0.9" height="5" fill="#b4b4b4"/><rect x="466.39" y="4.4" width="0.9" height="7.6" fill="#e4e4e4"/></svg>
<div style="position:absolute;left:302.2px;top:368.5px;width:4.2px;height:11.5px;background:linear-gradient(180deg,#1e78e0,#3aa0ff);"></div>
<div style="position:absolute;left:303.8px;top:369px;width:1px;height:11px;background:#9fd4ff;"></div>
<div style="position:absolute;left:2px;top:380px;width:116.5px;height:10px;background:linear-gradient(180deg,#3f0c98 0%,#340a84 40%,#22096a 70%,#180a50 100%);"></div>
<div style="position:absolute;left:2px;top:384px;width:116.5px;height:6px;background-image:repeating-conic-gradient(rgba(0,0,0,.28) 0% 25%, rgba(0,0,0,0) 0% 50%);background-size:2px 2px;opacity:0.6;"></div>
<div style="position:absolute;left:118.5px;top:380px;width:10.5px;height:10px;background:#15101f;"></div>
<div style="position:absolute;left:129px;top:380.3px;width:471px;height:9.6px;background:linear-gradient(180deg,#00eeff 0%,#00eeff 53%,#55a4ff 55%,#55a4ff 100%);"></div>
<div style="position:absolute;left:593px;top:380.3px;width:7px;height:9.6px;background:linear-gradient(90deg,rgba(120,230,160,0),rgba(120,230,160,.75));"></div>
<svg style="position:absolute;left:3.8px;top:381.2px" width="10" height="7.4" viewBox="0 0 10 7.4"><ellipse cx="5" cy="3.7" rx="4.8" ry="3.4" fill="#fff"/><ellipse cx="5" cy="4" rx="2.9" ry="2.1" fill="#1a1a1a"/><ellipse cx="5" cy="2.9" rx="1.2" ry="0.8" fill="#fff"/></svg>
<div style="position:absolute;left:14px;top:380.3px;width:11px;height:4.9px;background:#00e8f8;"></div>
<div style="position:absolute;left:14px;top:385.2px;width:11px;height:4.6px;background:#4f9cf6;"></div>
<span id="layer" class="t" style="left:28.5px;top:380.3px;font:normal 9px/10.5px 'Liberation Serif','Noto Sans CJK SC',sans-serif;color:#f4f4f4;transform:scale(0.9809,0.8200);-webkit-text-stroke:0.2px #f0f0f0;">新图层</span>
<div style="position:absolute;left:2px;top:390px;width:127px;height:26px;background:#1b1b1b;"></div>
<div style="position:absolute;left:2px;top:390px;width:127px;height:26px;background-image:repeating-conic-gradient(#2a0a84 0% 25%, rgba(0,0,0,0) 0% 50%);background-size:2px 2px;opacity:0.68;"></div>
<div style="position:absolute;left:129px;top:390px;width:471px;height:26px;background:#141018;"></div>
<svg style="position:absolute;left:129px;top:390px" width="471" height="26" viewBox="0 0 471 26"><line x1="0.30" y1="0.5" x2="0.30" y2="26" stroke="#6a2a8c" stroke-width="1" stroke-dasharray="1.4 0.9" opacity=".85"/><line x1="4.79" y1="0.5" x2="4.79" y2="26" stroke="#6a2a8c" stroke-width="1" stroke-dasharray="1.4 0.9" opacity=".85"/><line x1="9.27" y1="0.5" x2="9.27" y2="26" stroke="#6a2a8c" stroke-width="1" stroke-dasharray="1.4 0.9" opacity=".85"/><line x1="13.76" y1="0.5" x2="13.76" y2="26" stroke="#6a2a8c" stroke-width="1" stroke-dasharray="1.4 0.9" opacity=".85"/><line x1="18.24" y1="0.5" x2="18.24" y2="26" stroke="#6a2a8c" stroke-width="1" stroke-dasharray="1.4 0.9" opacity=".85"/><line x1="22.73" y1="0.5" x2="22.73" y2="26" stroke="#6a2a8c" stroke-width="1" stroke-dasharray="1.4 0.9" opacity=".85"/><line x1="27.22" y1="0.5" x2="27.22" y2="26" stroke="#6a2a8c" stroke-width="1" stroke-dasharray="1.4 0.9" opacity=".85"/><line x1="31.70" y1="0.5" x2="31.70" y2="26" stroke="#6a2a8c" stroke-width="1" stroke-dasharray="1.4 0.9" opacity=".85"/><line x1="36.19" y1="0.5" x2="36.19" y2="26" stroke="#6a2a8c" stroke-width="1" stroke-dasharray="1.4 0.9" opacity=".85"/><line x1="40.67" y1="0.5" x2="40.67" y2="26" stroke="#6a2a8c" stroke-width="1" stroke-dasharray="1.4 0.9" opacity=".85"/><line x1="45.16" y1="0.5" x2="45.16" y2="26" stroke="#6a2a8c" stroke-width="1" stroke-dasharray="1.4 0.9" opacity=".85"/><line x1="49.65" y1="0.5" x2="49.65" y2="26" stroke="#6a2a8c" stroke-width="1" stroke-dasharray="1.4 0.9" opacity=".85"/><line x1="54.13" y1="0.5" x2="54.13" y2="26" stroke="#6a2a8c" stroke-width="1" stroke-dasharray="1.4 0.9" opacity=".85"/><line x1="58.62" y1="0.5" x2="58.62" y2="26" stroke="#6a2a8c" stroke-width="1" stroke-dasharray="1.4 0.9" opacity=".85"/><line x1="63.10" y1="0.5" x2="63.10" y2="26" stroke="#6a2a8c" stroke-width="1" stroke-dasharray="1.4 0.9" opacity=".85"/><line x1="67.59" y1="0.5" x2="67.59" y2="26" stroke="#6a2a8c" stroke-width="1" stroke-dasharray="1.4 0.9" opacity=".85"/><line x1="72.08" y1="0.5" x2="72.08" y2="26" stroke="#6a2a8c" stroke-width="1" stroke-dasharray="1.4 0.9" opacity=".85"/><line x1="76.56" y1="0.5" x2="76.56" y2="26" stroke="#6a2a8c" stroke-width="1" stroke-dasharray="1.4 0.9" opacity=".85"/><line x1="81.05" y1="0.5" x2="81.05" y2="26" stroke="#6a2a8c" stroke-width="1" stroke-dasharray="1.4 0.9" opacity=".85"/><line x1="85.53" y1="0.5" x2="85.53" y2="26" stroke="#6a2a8c" stroke-width="1" stroke-dasharray="1.4 0.9" opacity=".85"/><line x1="90.02" y1="0.5" x2="90.02" y2="26" stroke="#6a2a8c" stroke-width="1" stroke-dasharray="1.4 0.9" opacity=".85"/><line x1="94.51" y1="0.5" x2="94.51" y2="26" stroke="#6a2a8c" stroke-width="1" stroke-dasharray="1.4 0.9" opacity=".85"/><line x1="98.99" y1="0.5" x2="98.99" y2="26" stroke="#6a2a8c" stroke-width="1" stroke-dasharray="1.4 0.9" opacity=".85"/><line x1="103.48" y1="0.5" x2="103.48" y2="26" stroke="#6a2a8c" stroke-width="1" stroke-dasharray="1.4 0.9" opacity=".85"/><line x1="107.96" y1="0.5" x2="107.96" y2="26" stroke="#6a2a8c" stroke-width="1" stroke-dasharray="1.4 0.9" opacity=".85"/><line x1="112.45" y1="0.5" x2="112.45" y2="26" stroke="#6a2a8c" stroke-width="1" stroke-dasharray="1.4 0.9" opacity=".85"/><line x1="116.94" y1="0.5" x2="116.94" y2="26" stroke="#6a2a8c" stroke-width="1" stroke-dasharray="1.4 0.9" opacity=".85"/><line x1="121.42" y1="0.5" x2="121.42" y2="26" stroke="#6a2a8c" stroke-width="1" stroke-dasharray="1.4 0.9" opacity=".85"/><line x1="125.91" y1="0.5" x2="125.91" y2="26" stroke="#6a2a8c" stroke-width="1" stroke-dasharray="1.4 0.9" opacity=".85"/><line x1="130.39" y1="0.5" x2="130.39" y2="26" stroke="#6a2a8c" stroke-width="1" stroke-dasharray="1.4 0.9" opacity=".85"/><line x1="134.88" y1="0.5" x2="134.88" y2="26" stroke="#6a2a8c" stroke-width="1" stroke-dasharray="1.4 0.9" opacity=".85"/><line x1="139.37" y1="0.5" x2="139.37" y2="26" stroke="#6a2a8c" stroke-width="1" stroke-dasharray="1.4 0.9" opacity=".85"/><line x1="143.85" y1="0.5" x2="143.85" y2="26" stroke="#6a2a8c" stroke-width="1" stroke-dasharray="1.4 0.9" opacity=".85"/><line x1="148.34" y1="0.5" x2="148.34" y2="26" stroke="#6a2a8c" stroke-width="1" stroke-dasharray="1.4 0.9" opacity=".85"/><line x1="152.82" y1="0.5" x2="152.82" y2="26" stroke="#6a2a8c" stroke-width="1" stroke-dasharray="1.4 0.9" opacity=".85"/><line x1="157.31" y1="0.5" x2="157.31" y2="26" stroke="#6a2a8c" stroke-width="1" stroke-dasharray="1.4 0.9" opacity=".85"/><line x1="161.80" y1="0.5" x2="161.80" y2="26" stroke="#6a2a8c" stroke-width="1" stroke-dasharray="1.4 0.9" opacity=".85"/><line x1="166.28" y1="0.5" x2="166.28" y2="26" stroke="#6a2a8c" stroke-width="1" stroke-dasharray="1.4 0.9" opacity=".85"/><line x1="170.77" y1="0.5" x2="170.77" y2="26" stroke="#6a2a8c" stroke-width="1" stroke-dasharray="1.4 0.9" opacity=".85"/><line x1="175.25" y1="0.5" x2="175.25" y2="26" stroke="#6a2a8c" stroke-width="1" stroke-dasharray="1.4 0.9" opacity=".85"/><line x1="179.74" y1="0.5" x2="179.74" y2="26" stroke="#6a2a8c" stroke-width="1" stroke-dasharray="1.4 0.9" opacity=".85"/><line x1="184.23" y1="0.5" x2="184.23" y2="26" stroke="#6a2a8c" stroke-width="1" stroke-dasharray="1.4 0.9" opacity=".85"/><line x1="188.71" y1="0.5" x2="188.71" y2="26" stroke="#6a2a8c" stroke-width="1" stroke-dasharray="1.4 0.9" opacity=".85"/><line x1="193.20" y1="0.5" x2="193.20" y2="26" stroke="#6a2a8c" stroke-width="1" stroke-dasharray="1.4 0.9" opacity=".85"/><line x1="197.68" y1="0.5" x2="197.68" y2="26" stroke="#6a2a8c" stroke-width="1" stroke-dasharray="1.4 0.9" opacity=".85"/><line x1="202.17" y1="0.5" x2="202.17" y2="26" stroke="#6a2a8c" stroke-width="1" stroke-dasharray="1.4 0.9" opacity=".85"/><line x1="206.66" y1="0.5" x2="206.66" y2="26" stroke="#6a2a8c" stroke-width="1" stroke-dasharray="1.4 0.9" opacity=".85"/><line x1="211.14" y1="0.5" x2="211.14" y2="26" stroke="#6a2a8c" stroke-width="1" stroke-dasharray="1.4 0.9" opacity=".85"/><line x1="215.63" y1="0.5" x2="215.63" y2="26" stroke="#6a2a8c" stroke-width="1" stroke-dasharray="1.4 0.9" opacity=".85"/><line x1="220.11" y1="0.5" x2="220.11" y2="26" stroke="#6a2a8c" stroke-width="1" stroke-dasharray="1.4 0.9" opacity=".85"/><line x1="224.60" y1="0.5" x2="224.60" y2="26" stroke="#6a2a8c" stroke-width="1" stroke-dasharray="1.4 0.9" opacity=".85"/><line x1="229.09" y1="0.5" x2="229.09" y2="26" stroke="#6a2a8c" stroke-width="1" stroke-dasharray="1.4 0.9" opacity=".85"/><line x1="233.57" y1="0.5" x2="233.57" y2="26" stroke="#6a2a8c" stroke-width="1" stroke-dasharray="1.4 0.9" opacity=".85"/><line x1="238.06" y1="0.5" x2="238.06" y2="26" stroke="#6a2a8c" stroke-width="1" stroke-dasharray="1.4 0.9" opacity=".85"/><line x1="242.54" y1="0.5" x2="242.54" y2="26" stroke="#6a2a8c" stroke-width="1" stroke-dasharray="1.4 0.9" opacity=".85"/><line x1="247.03" y1="0.5" x2="247.03" y2="26" stroke="#6a2a8c" stroke-width="1" stroke-dasharray="1.4 0.9" opacity=".85"/><line x1="251.52" y1="0.5" x2="251.52" y2="26" stroke="#6a2a8c" stroke-width="1" stroke-dasharray="1.4 0.9" opacity=".85"/><line x1="256.00" y1="0.5" x2="256.00" y2="26" stroke="#6a2a8c" stroke-width="1" stroke-dasharray="1.4 0.9" opacity=".85"/><line x1="260.49" y1="0.5" x2="260.49" y2="26" stroke="#6a2a8c" stroke-width="1" stroke-dasharray="1.4 0.9" opacity=".85"/><line x1="264.97" y1="0.5" x2="264.97" y2="26" stroke="#6a2a8c" stroke-width="1" stroke-dasharray="1.4 0.9" opacity=".85"/><line x1="269.46" y1="0.5" x2="269.46" y2="26" stroke="#6a2a8c" stroke-width="1" stroke-dasharray="1.4 0.9" opacity=".85"/><line x1="273.95" y1="0.5" x2="273.95" y2="26" stroke="#6a2a8c" stroke-width="1" stroke-dasharray="1.4 0.9" opacity=".85"/><line x1="278.43" y1="0.5" x2="278.43" y2="26" stroke="#6a2a8c" stroke-width="1" stroke-dasharray="1.4 0.9" opacity=".85"/><line x1="282.92" y1="0.5" x2="282.92" y2="26" stroke="#6a2a8c" stroke-width="1" stroke-dasharray="1.4 0.9" opacity=".85"/><line x1="287.40" y1="0.5" x2="287.40" y2="26" stroke="#6a2a8c" stroke-width="1" stroke-dasharray="1.4 0.9" opacity=".85"/><line x1="291.89" y1="0.5" x2="291.89" y2="26" stroke="#6a2a8c" stroke-width="1" stroke-dasharray="1.4 0.9" opacity=".85"/><line x1="296.38" y1="0.5" x2="296.38" y2="26" stroke="#6a2a8c" stroke-width="1" stroke-dasharray="1.4 0.9" opacity=".85"/><line x1="300.86" y1="0.5" x2="300.86" y2="26" stroke="#6a2a8c" stroke-width="1" stroke-dasharray="1.4 0.9" opacity=".85"/><line x1="305.35" y1="0.5" x2="305.35" y2="26" stroke="#6a2a8c" stroke-width="1" stroke-dasharray="1.4 0.9" opacity=".85"/><line x1="309.83" y1="0.5" x2="309.83" y2="26" stroke="#6a2a8c" stroke-width="1" stroke-dasharray="1.4 0.9" opacity=".85"/><line x1="314.32" y1="0.5" x2="314.32" y2="26" stroke="#6a2a8c" stroke-width="1" stroke-dasharray="1.4 0.9" opacity=".85"/><line x1="318.81" y1="0.5" x2="318.81" y2="26" stroke="#6a2a8c" stroke-width="1" stroke-dasharray="1.4 0.9" opacity=".85"/><line x1="323.29" y1="0.5" x2="323.29" y2="26" stroke="#6a2a8c" stroke-width="1" stroke-dasharray="1.4 0.9" opacity=".85"/><line x1="327.78" y1="0.5" x2="327.78" y2="26" stroke="#6a2a8c" stroke-width="1" stroke-dasharray="1.4 0.9" opacity=".85"/><line x1="332.26" y1="0.5" x2="332.26" y2="26" stroke="#6a2a8c" stroke-width="1" stroke-dasharray="1.4 0.9" opacity=".85"/><line x1="336.75" y1="0.5" x2="336.75" y2="26" stroke="#6a2a8c" stroke-width="1" stroke-dasharray="1.4 0.9" opacity=".85"/><line x1="341.24" y1="0.5" x2="341.24" y2="26" stroke="#6a2a8c" stroke-width="1" stroke-dasharray="1.4 0.9" opacity=".85"/><line x1="345.72" y1="0.5" x2="345.72" y2="26" stroke="#6a2a8c" stroke-width="1" stroke-dasharray="1.4 0.9" opacity=".85"/><line x1="350.21" y1="0.5" x2="350.21" y2="26" stroke="#6a2a8c" stroke-width="1" stroke-dasharray="1.4 0.9" opacity=".85"/><line x1="354.69" y1="0.5" x2="354.69" y2="26" stroke="#6a2a8c" stroke-width="1" stroke-dasharray="1.4 0.9" opacity=".85"/><line x1="359.18" y1="0.5" x2="359.18" y2="26" stroke="#6a2a8c" stroke-width="1" stroke-dasharray="1.4 0.9" opacity=".85"/><line x1="363.67" y1="0.5" x2="363.67" y2="26" stroke="#6a2a8c" stroke-width="1" stroke-dasharray="1.4 0.9" opacity=".85"/><line x1="368.15" y1="0.5" x2="368.15" y2="26" stroke="#6a2a8c" stroke-width="1" stroke-dasharray="1.4 0.9" opacity=".85"/><line x1="372.64" y1="0.5" x2="372.64" y2="26" stroke="#6a2a8c" stroke-width="1" stroke-dasharray="1.4 0.9" opacity=".85"/><line x1="377.12" y1="0.5" x2="377.12" y2="26" stroke="#6a2a8c" stroke-width="1" stroke-dasharray="1.4 0.9" opacity=".85"/><line x1="381.61" y1="0.5" x2="381.61" y2="26" stroke="#6a2a8c" stroke-width="1" stroke-dasharray="1.4 0.9" opacity=".85"/><line x1="386.10" y1="0.5" x2="386.10" y2="26" stroke="#6a2a8c" stroke-width="1" stroke-dasharray="1.4 0.9" opacity=".85"/><line x1="390.58" y1="0.5" x2="390.58" y2="26" stroke="#6a2a8c" stroke-width="1" stroke-dasharray="1.4 0.9" opacity=".85"/><line x1="395.07" y1="0.5" x2="395.07" y2="26" stroke="#6a2a8c" stroke-width="1" stroke-dasharray="1.4 0.9" opacity=".85"/><line x1="399.55" y1="0.5" x2="399.55" y2="26" stroke="#6a2a8c" stroke-width="1" stroke-dasharray="1.4 0.9" opacity=".85"/><line x1="404.04" y1="0.5" x2="404.04" y2="26" stroke="#6a2a8c" stroke-width="1" stroke-dasharray="1.4 0.9" opacity=".85"/><line x1="408.53" y1="0.5" x2="408.53" y2="26" stroke="#6a2a8c" stroke-width="1" stroke-dasharray="1.4 0.9" opacity=".85"/><line x1="413.01" y1="0.5" x2="413.01" y2="26" stroke="#6a2a8c" stroke-width="1" stroke-dasharray="1.4 0.9" opacity=".85"/><line x1="417.50" y1="0.5" x2="417.50" y2="26" stroke="#6a2a8c" stroke-width="1" stroke-dasharray="1.4 0.9" opacity=".85"/><line x1="421.98" y1="0.5" x2="421.98" y2="26" stroke="#6a2a8c" stroke-width="1" stroke-dasharray="1.4 0.9" opacity=".85"/><line x1="426.47" y1="0.5" x2="426.47" y2="26" stroke="#6a2a8c" stroke-width="1" stroke-dasharray="1.4 0.9" opacity=".85"/><line x1="430.96" y1="0.5" x2="430.96" y2="26" stroke="#6a2a8c" stroke-width="1" stroke-dasharray="1.4 0.9" opacity=".85"/><line x1="435.44" y1="0.5" x2="435.44" y2="26" stroke="#6a2a8c" stroke-width="1" stroke-dasharray="1.4 0.9" opacity=".85"/><line x1="439.93" y1="0.5" x2="439.93" y2="26" stroke="#6a2a8c" stroke-width="1" stroke-dasharray="1.4 0.9" opacity=".85"/><line x1="444.41" y1="0.5" x2="444.41" y2="26" stroke="#6a2a8c" stroke-width="1" stroke-dasharray="1.4 0.9" opacity=".85"/><line x1="448.90" y1="0.5" x2="448.90" y2="26" stroke="#6a2a8c" stroke-width="1" stroke-dasharray="1.4 0.9" opacity=".85"/><line x1="453.39" y1="0.5" x2="453.39" y2="26" stroke="#6a2a8c" stroke-width="1" stroke-dasharray="1.4 0.9" opacity=".85"/><line x1="457.87" y1="0.5" x2="457.87" y2="26" stroke="#6a2a8c" stroke-width="1" stroke-dasharray="1.4 0.9" opacity=".85"/><line x1="462.36" y1="0.5" x2="462.36" y2="26" stroke="#6a2a8c" stroke-width="1" stroke-dasharray="1.4 0.9" opacity=".85"/><line x1="466.84" y1="0.5" x2="466.84" y2="26" stroke="#6a2a8c" stroke-width="1" stroke-dasharray="1.4 0.9" opacity=".85"/><line x1="0" y1="9.2" x2="471" y2="9.2" stroke="#8a868e" stroke-width="1" stroke-dasharray="2.4 2.1" stroke-dashoffset="-1.6" opacity=".7"/><line x1="0" y1="18.8" x2="471" y2="18.8" stroke="#8a868e" stroke-width="1" stroke-dasharray="2.4 2.1" stroke-dashoffset="-1.6" opacity=".7"/></svg>
<div style="position:absolute;left:129px;top:29.5px;width:471px;height:322.5px;background:#000;"></div>
<span id="fps1" class="t" style="left:130.7px;top:29.6px;font:normal 7.5px/10px 'Liberation Mono','Noto Sans CJK SC',monospace;color:#ececec;transform:scale(0.9988,1.1600);">FPS</span>
<span id="fps2" class="t" style="left:144.2px;top:30.6px;font:normal 9px/10px 'Liberation Serif','Noto Serif CJK SC',serif;color:#ececec;transform:scale(0.9983,0.9000);"><span lang="ja" style="font-family:'Noto Sans CJK JP',sans-serif">：</span></span>
<span id="fps3" class="t" style="left:153.2px;top:29.6px;font:normal 7.5px/10px 'Liberation Mono','Noto Sans CJK SC',monospace;color:#ececec;transform:scale(0.9983,1.1600);">58</span>
<span id="bul1" class="t" style="left:130.7px;top:38.9px;font:normal 7.5px/10px 'Liberation Mono','Noto Sans CJK SC',monospace;color:#ececec;transform:scale(0.9995,1.1600);">Bullets</span>
<span id="bul2" class="t" style="left:162.2px;top:39.9px;font:normal 9px/10px 'Liberation Serif','Noto Serif CJK SC',serif;color:#ececec;transform:scale(0.9983,0.9000);"><span lang="ja" style="font-family:'Noto Sans CJK JP',sans-serif">：</span></span>
<span id="bul3" class="t" style="left:171.2px;top:38.9px;font:normal 7.5px/10px 'Liberation Mono','Noto Sans CJK SC',monospace;color:#ececec;transform:scale(0.9983,1.1600);">64</span>
<svg style="position:absolute;left:222px;top:40px" width="288" height="300" viewBox="0 0 288 300"><defs><filter id="gl" x="-20%" y="-20%" width="140%" height="140%"><feGaussianBlur stdDeviation="0.8"/></filter><filter id="gs2" x="-20%" y="-20%" width="140%" height="140%"><feGaussianBlur stdDeviation="0.55"/></filter><filter id="gs" x="-20%" y="-20%" width="140%" height="140%"><feGaussianBlur stdDeviation="0.35"/></filter></defs><line x1="12.4" y1="0" x2="12.4" y2="300" stroke="#4a4a4a" stroke-width="1" stroke-dasharray="1.6 1.1" opacity=".42"/><line x1="36.4" y1="0" x2="36.4" y2="300" stroke="#4a4a4a" stroke-width="1" stroke-dasharray="1.6 1.1" opacity=".42"/><line x1="60.4" y1="0" x2="60.4" y2="300" stroke="#4a4a4a" stroke-width="1" stroke-dasharray="1.6 1.1" opacity=".42"/><line x1="84.4" y1="0" x2="84.4" y2="300" stroke="#4a4a4a" stroke-width="1" stroke-dasharray="1.6 1.1" opacity=".42"/><line x1="108.4" y1="0" x2="108.4" y2="300" stroke="#4a4a4a" stroke-width="1" stroke-dasharray="1.6 1.1" opacity=".42"/><line x1="132.4" y1="0" x2="132.4" y2="300" stroke="#4a4a4a" stroke-width="1" stroke-dasharray="1.6 1.1" opacity=".42"/><line x1="156.4" y1="0" x2="156.4" y2="300" stroke="#4a4a4a" stroke-width="1" stroke-dasharray="1.6 1.1" opacity=".42"/><line x1="180.4" y1="0" x2="180.4" y2="300" stroke="#4a4a4a" stroke-width="1" stroke-dasharray="1.6 1.1" opacity=".42"/><line x1="204.4" y1="0" x2="204.4" y2="300" stroke="#4a4a4a" stroke-width="1" stroke-dasharray="1.6 1.1" opacity=".42"/><line x1="228.4" y1="0" x2="228.4" y2="300" stroke="#4a4a4a" stroke-width="1" stroke-dasharray="1.6 1.1" opacity=".42"/><line x1="252.4" y1="0" x2="252.4" y2="300" stroke="#4a4a4a" stroke-width="1" stroke-dasharray="1.6 1.1" opacity=".42"/><line x1="276.4" y1="0" x2="276.4" y2="300" stroke="#4a4a4a" stroke-width="1" stroke-dasharray="1.6 1.1" opacity=".42"/><line x1="1" y1="10.71" x2="288" y2="10.71" stroke="#4c4c4c" stroke-width="1" stroke-dasharray="1.5 1.5" opacity=".48"/><line x1="1" y1="32.14" x2="288" y2="32.14" stroke="#4c4c4c" stroke-width="1" stroke-dasharray="1.5 1.5" opacity=".48"/><line x1="1" y1="53.57" x2="288" y2="53.57" stroke="#4c4c4c" stroke-width="1" stroke-dasharray="1.5 1.5" opacity=".48"/><line x1="1" y1="75.00" x2="288" y2="75.00" stroke="#4c4c4c" stroke-width="1" stroke-dasharray="1.5 1.5" opacity=".48"/><line x1="1" y1="96.43" x2="288" y2="96.43" stroke="#4c4c4c" stroke-width="1" stroke-dasharray="1.5 1.5" opacity=".48"/><line x1="1" y1="117.86" x2="288" y2="117.86" stroke="#4c4c4c" stroke-width="1" stroke-dasharray="1.5 1.5" opacity=".48"/><line x1="1" y1="139.29" x2="288" y2="139.29" stroke="#4c4c4c" stroke-width="1" stroke-dasharray="1.5 1.5" opacity=".48"/><line x1="1" y1="160.71" x2="288" y2="160.71" stroke="#4c4c4c" stroke-width="1" stroke-dasharray="1.5 1.5" opacity=".48"/><line x1="1" y1="182.14" x2="288" y2="182.14" stroke="#4c4c4c" stroke-width="1" stroke-dasharray="1.5 1.5" opacity=".48"/><line x1="1" y1="203.57" x2="288" y2="203.57" stroke="#4c4c4c" stroke-width="1" stroke-dasharray="1.5 1.5" opacity=".48"/><line x1="1" y1="225.00" x2="288" y2="225.00" stroke="#4c4c4c" stroke-width="1" stroke-dasharray="1.5 1.5" opacity=".48"/><line x1="1" y1="246.43" x2="288" y2="246.43" stroke="#4c4c4c" stroke-width="1" stroke-dasharray="1.5 1.5" opacity=".48"/><line x1="1" y1="267.86" x2="288" y2="267.86" stroke="#4c4c4c" stroke-width="1" stroke-dasharray="1.5 1.5" opacity=".48"/><line x1="1" y1="289.29" x2="288" y2="289.29" stroke="#4c4c4c" stroke-width="1" stroke-dasharray="1.5 1.5" opacity=".48"/><g transform="translate(144.00,21.60) scale(1,0.8929)"><g filter="url(#gl)" fill="none" stroke="#5e5a0a" stroke-width="5" opacity=".95"><circle cx="0.00" cy="11.40" r="50.4"/><circle cx="-9.87" cy="5.70" r="50.4"/><circle cx="-9.87" cy="-5.70" r="50.4"/><circle cx="-0.00" cy="-11.40" r="50.4"/><circle cx="9.87" cy="-5.70" r="50.4"/><circle cx="9.87" cy="5.70" r="50.4"/></g><g filter="url(#gs2)" fill="none" stroke="#8a8412" stroke-width="3.3" opacity=".92"><circle cx="0.00" cy="11.40" r="50.4"/><circle cx="-9.87" cy="5.70" r="50.4"/><circle cx="-9.87" cy="-5.70" r="50.4"/><circle cx="-0.00" cy="-11.40" r="50.4"/><circle cx="9.87" cy="-5.70" r="50.4"/><circle cx="9.87" cy="5.70" r="50.4"/></g><g filter="url(#gs)"><circle r="34" fill="#000" opacity=".55"/><polygon points="0.00,37.10 -1.82,32.81 -6.47,32.40 -2.95,29.34 -4.00,24.80 0.00,27.20 4.00,24.80 2.95,29.34 6.47,32.40 1.82,32.81" fill="#ffe880" stroke="#ff50cc" stroke-width="0.9" stroke-linejoin="miter"/><polygon points="0.00,33.16 -0.84,31.46 -2.72,31.18 -1.36,29.86 -1.68,27.99 0.00,28.87 1.68,27.99 1.36,29.86 2.72,31.18 0.84,31.46" fill="#fffff4"/><polygon points="-16.10,33.43 -15.88,28.77 -19.89,26.39 -15.39,25.16 -14.36,20.61 -11.80,24.51 -7.16,24.08 -10.07,27.72 -8.23,32.00 -12.59,30.35" fill="#ffe880" stroke="#ff50cc" stroke-width="0.9" stroke-linejoin="miter"/><polygon points="-14.39,29.87 -14.41,27.98 -15.98,26.92 -14.18,26.31 -13.66,24.49 -12.53,26.01 -10.63,25.95 -11.73,27.49 -11.08,29.27 -12.89,28.71" fill="#fffff4"/><polygon points="-29.01,23.13 -26.79,19.03 -29.36,15.15 -24.78,15.99 -21.88,12.34 -21.27,16.96 -16.90,18.59 -21.10,20.60 -21.30,25.26 -24.51,21.88" fill="#ffe880" stroke="#ff50cc" stroke-width="0.9" stroke-linejoin="miter"/><polygon points="-25.92,20.67 -25.12,18.96 -26.07,17.32 -24.19,17.55 -22.93,16.14 -22.57,18.00 -20.84,18.76 -22.49,19.68 -22.69,21.57 -24.07,20.27" fill="#fffff4"/><polygon points="-36.17,8.26 -32.39,5.52 -33.03,0.90 -29.26,3.65 -25.07,1.62 -26.52,6.05 -23.29,9.41 -27.95,9.40 -30.15,13.52 -31.58,9.08" fill="#ffe880" stroke="#ff50cc" stroke-width="0.9" stroke-linejoin="miter"/><polygon points="-32.32,7.38 -30.86,6.18 -31.01,4.29 -29.41,5.32 -27.66,4.59 -28.14,6.42 -26.91,7.86 -28.81,7.97 -29.80,9.59 -30.48,7.82" fill="#fffff4"/><polygon points="-36.17,-8.26 -31.58,-9.08 -30.15,-13.52 -27.95,-9.40 -23.29,-9.41 -26.52,-6.05 -25.07,-1.62 -29.26,-3.65 -33.03,-0.90 -32.39,-5.52" fill="#ffe880" stroke="#ff50cc" stroke-width="0.9" stroke-linejoin="miter"/><polygon points="-32.32,-7.38 -30.48,-7.82 -29.80,-9.59 -28.81,-7.97 -26.91,-7.86 -28.14,-6.42 -27.66,-4.59 -29.41,-5.32 -31.01,-4.29 -30.86,-6.18" fill="#fffff4"/><polygon points="-29.01,-23.13 -24.51,-21.88 -21.30,-25.26 -21.10,-20.60 -16.90,-18.59 -21.27,-16.96 -21.88,-12.34 -24.78,-15.99 -29.36,-15.15 -26.79,-19.03" fill="#ffe880" stroke="#ff50cc" stroke-width="0.9" stroke-linejoin="miter"/><polygon points="-25.92,-20.67 -24.07,-20.27 -22.69,-21.57 -22.49,-19.68 -20.84,-18.76 -22.57,-18.00 -22.93,-16.14 -24.19,-17.55 -26.07,-17.32 -25.12,-18.96" fill="#fffff4"/><polygon points="-16.10,-33.43 -12.59,-30.35 -8.23,-32.00 -10.07,-27.72 -7.16,-24.08 -11.80,-24.51 -14.36,-20.61 -15.39,-25.16 -19.89,-26.39 -15.88,-28.77" fill="#ffe880" stroke="#ff50cc" stroke-width="0.9" stroke-linejoin="miter"/><polygon points="-14.39,-29.87 -12.89,-28.71 -11.08,-29.27 -11.73,-27.49 -10.63,-25.95 -12.53,-26.01 -13.66,-24.49 -14.18,-26.31 -15.98,-26.92 -14.41,-27.98" fill="#fffff4"/><polygon points="-0.00,-37.10 1.82,-32.81 6.47,-32.40 2.95,-29.34 4.00,-24.80 -0.00,-27.20 -4.00,-24.80 -2.95,-29.34 -6.47,-32.40 -1.82,-32.81" fill="#ffe880" stroke="#ff50cc" stroke-width="0.9" stroke-linejoin="miter"/><polygon points="-0.00,-33.16 0.84,-31.46 2.72,-31.18 1.36,-29.86 1.68,-27.99 -0.00,-28.87 -1.68,-27.99 -1.36,-29.86 -2.72,-31.18 -0.84,-31.46" fill="#fffff4"/><polygon points="16.10,-33.43 15.88,-28.77 19.89,-26.39 15.39,-25.16 14.36,-20.61 11.80,-24.51 7.16,-24.08 10.07,-27.72 8.23,-32.00 12.59,-30.35" fill="#ffe880" stroke="#ff50cc" stroke-width="0.9" stroke-linejoin="miter"/><polygon points="14.39,-29.87 14.41,-27.98 15.98,-26.92 14.18,-26.31 13.66,-24.49 12.53,-26.01 10.63,-25.95 11.73,-27.49 11.08,-29.27 12.89,-28.71" fill="#fffff4"/><polygon points="29.01,-23.13 26.79,-19.03 29.36,-15.15 24.78,-15.99 21.88,-12.34 21.27,-16.96 16.90,-18.59 21.10,-20.60 21.30,-25.26 24.51,-21.88" fill="#ffe880" stroke="#ff50cc" stroke-width="0.9" stroke-linejoin="miter"/><polygon points="25.92,-20.67 25.12,-18.96 26.07,-17.32 24.19,-17.55 22.93,-16.14 22.57,-18.00 20.84,-18.76 22.49,-19.68 22.69,-21.57 24.07,-20.27" fill="#fffff4"/><polygon points="36.17,-8.26 32.39,-5.52 33.03,-0.90 29.26,-3.65 25.07,-1.62 26.52,-6.05 23.29,-9.41 27.95,-9.40 30.15,-13.52 31.58,-9.08" fill="#ffe880" stroke="#ff50cc" stroke-width="0.9" stroke-linejoin="miter"/><polygon points="32.32,-7.38 30.86,-6.18 31.01,-4.29 29.41,-5.32 27.66,-4.59 28.14,-6.42 26.91,-7.86 28.81,-7.97 29.80,-9.59 30.48,-7.82" fill="#fffff4"/><polygon points="36.17,8.26 31.58,9.08 30.15,13.52 27.95,9.40 23.29,9.41 26.52,6.05 25.07,1.62 29.26,3.65 33.03,0.90 32.39,5.52" fill="#ffe880" stroke="#ff50cc" stroke-width="0.9" stroke-linejoin="miter"/><polygon points="32.32,7.38 30.48,7.82 29.80,9.59 28.81,7.97 26.91,7.86 28.14,6.42 27.66,4.59 29.41,5.32 31.01,4.29 30.86,6.18" fill="#fffff4"/><polygon points="29.01,23.13 24.51,21.88 21.30,25.26 21.10,20.60 16.90,18.59 21.27,16.96 21.88,12.34 24.78,15.99 29.36,15.15 26.79,19.03" fill="#ffe880" stroke="#ff50cc" stroke-width="0.9" stroke-linejoin="miter"/><polygon points="25.92,20.67 24.07,20.27 22.69,21.57 22.49,19.68 20.84,18.76 22.57,18.00 22.93,16.14 24.19,17.55 26.07,17.32 25.12,18.96" fill="#fffff4"/><polygon points="16.10,33.43 12.59,30.35 8.23,32.00 10.07,27.72 7.16,24.08 11.80,24.51 14.36,20.61 15.39,25.16 19.89,26.39 15.88,28.77" fill="#ffe880" stroke="#ff50cc" stroke-width="0.9" stroke-linejoin="miter"/><polygon points="14.39,29.87 12.89,28.71 11.08,29.27 11.73,27.49 10.63,25.95 12.53,26.01 13.66,24.49 14.18,26.31 15.98,26.92 14.41,27.98" fill="#fffff4"/><circle r="22" fill="none" stroke="#a86414" stroke-width="4" opacity=".8"/><polygon points="0.00,28.60 -1.82,24.51 -6.28,24.04 -2.95,21.04 -3.88,16.66 0.00,18.90 3.88,16.66 2.95,21.04 6.28,24.04 1.82,24.51" fill="#ffefb8" stroke="#ffa024" stroke-width="0.75" stroke-linejoin="miter"/><polygon points="0.00,25.63 -1.10,23.52 -3.45,23.12 -1.78,21.42 -2.13,19.06 0.00,20.12 2.13,19.06 1.78,21.42 3.45,23.12 1.10,23.52" fill="#ffffff"/><polygon points="-12.41,25.77 -12.28,21.29 -16.09,18.94 -11.79,17.68 -10.72,13.33 -8.20,17.03 -3.73,16.69 -6.47,20.24 -4.77,24.38 -8.99,22.87" fill="#ffefb8" stroke="#ffa024" stroke-width="0.75" stroke-linejoin="miter"/><polygon points="-11.12,23.09 -11.20,20.71 -13.14,19.33 -10.90,18.53 -10.19,16.25 -8.73,18.13 -6.35,18.10 -7.69,20.07 -6.92,22.33 -9.21,21.67" fill="#ffffff"/><polygon points="-22.36,17.83 -20.30,13.86 -22.71,10.08 -18.29,10.81 -15.44,7.35 -14.78,11.78 -10.61,13.42 -14.61,15.42 -14.88,19.90 -18.03,16.71" fill="#ffefb8" stroke="#ffa024" stroke-width="0.75" stroke-linejoin="miter"/><polygon points="-20.04,15.98 -19.07,13.80 -20.23,11.72 -17.86,11.96 -16.23,10.22 -15.73,12.55 -13.57,13.55 -15.64,14.75 -15.92,17.12 -17.70,15.52" fill="#ffffff"/><polygon points="-27.88,6.36 -24.30,3.68 -24.83,-0.77 -21.17,1.81 -17.11,-0.07 -18.43,4.21 -15.38,7.49 -19.86,7.56 -22.04,11.47 -23.49,7.23" fill="#ffefb8" stroke="#ffa024" stroke-width="0.75" stroke-linejoin="miter"/><polygon points="-24.99,5.70 -23.17,4.16 -23.31,1.78 -21.28,3.03 -19.06,2.16 -19.62,4.48 -18.11,6.32 -20.49,6.51 -21.77,8.51 -22.68,6.31" fill="#ffffff"/><polygon points="-27.88,-6.36 -23.49,-7.23 -22.04,-11.47 -19.86,-7.56 -15.38,-7.49 -18.43,-4.21 -17.11,0.07 -21.17,-1.81 -24.83,0.77 -24.30,-3.68" fill="#ffefb8" stroke="#ffa024" stroke-width="0.75" stroke-linejoin="miter"/><polygon points="-24.99,-5.70 -22.68,-6.31 -21.77,-8.51 -20.49,-6.51 -18.11,-6.32 -19.62,-4.48 -19.06,-2.16 -21.28,-3.03 -23.31,-1.78 -23.17,-4.16" fill="#ffffff"/><polygon points="-22.36,-17.83 -18.03,-16.71 -14.88,-19.90 -14.61,-15.42 -10.61,-13.42 -14.78,-11.78 -15.44,-7.35 -18.29,-10.81 -22.71,-10.08 -20.30,-13.86" fill="#ffefb8" stroke="#ffa024" stroke-width="0.75" stroke-linejoin="miter"/><polygon points="-20.04,-15.98 -17.70,-15.52 -15.92,-17.12 -15.64,-14.75 -13.57,-13.55 -15.73,-12.55 -16.23,-10.22 -17.86,-11.96 -20.23,-11.72 -19.07,-13.80" fill="#ffffff"/><polygon points="-12.41,-25.77 -8.99,-22.87 -4.77,-24.38 -6.47,-20.24 -3.73,-16.69 -8.20,-17.03 -10.72,-13.33 -11.79,-17.68 -16.09,-18.94 -12.28,-21.29" fill="#ffefb8" stroke="#ffa024" stroke-width="0.75" stroke-linejoin="miter"/><polygon points="-11.12,-23.09 -9.21,-21.67 -6.92,-22.33 -7.69,-20.07 -6.35,-18.10 -8.73,-18.13 -10.19,-16.25 -10.90,-18.53 -13.14,-19.33 -11.20,-20.71" fill="#ffffff"/><polygon points="-0.00,-28.60 1.82,-24.51 6.28,-24.04 2.95,-21.04 3.88,-16.66 -0.00,-18.90 -3.88,-16.66 -2.95,-21.04 -6.28,-24.04 -1.82,-24.51" fill="#ffefb8" stroke="#ffa024" stroke-width="0.75" stroke-linejoin="miter"/><polygon points="-0.00,-25.63 1.10,-23.52 3.45,-23.12 1.78,-21.42 2.13,-19.06 -0.00,-20.12 -2.13,-19.06 -1.78,-21.42 -3.45,-23.12 -1.10,-23.52" fill="#ffffff"/><polygon points="12.41,-25.77 12.28,-21.29 16.09,-18.94 11.79,-17.68 10.72,-13.33 8.20,-17.03 3.73,-16.69 6.47,-20.24 4.77,-24.38 8.99,-22.87" fill="#ffefb8" stroke="#ffa024" stroke-width="0.75" stroke-linejoin="miter"/><polygon points="11.12,-23.09 11.20,-20.71 13.14,-19.33 10.90,-18.53 10.19,-16.25 8.73,-18.13 6.35,-18.10 7.69,-20.07 6.92,-22.33 9.21,-21.67" fill="#ffffff"/><polygon points="22.36,-17.83 20.30,-13.86 22.71,-10.08 18.29,-10.81 15.44,-7.35 14.78,-11.78 10.61,-13.42 14.61,-15.42 14.88,-19.90 18.03,-16.71" fill="#ffefb8" stroke="#ffa024" stroke-width="0.75" stroke-linejoin="miter"/><polygon points="20.04,-15.98 19.07,-13.80 20.23,-11.72 17.86,-11.96 16.23,-10.22 15.73,-12.55 13.57,-13.55 15.64,-14.75 15.92,-17.12 17.70,-15.52" fill="#ffffff"/><polygon points="27.88,-6.36 24.30,-3.68 24.83,0.77 21.17,-1.81 17.11,0.07 18.43,-4.21 15.38,-7.49 19.86,-7.56 22.04,-11.47 23.49,-7.23" fill="#ffefb8" stroke="#ffa024" stroke-width="0.75" stroke-linejoin="miter"/><polygon points="24.99,-5.70 23.17,-4.16 23.31,-1.78 21.28,-3.03 19.06,-2.16 19.62,-4.48 18.11,-6.32 20.49,-6.51 21.77,-8.51 22.68,-6.31" fill="#ffffff"/><polygon points="27.88,6.36 23.49,7.23 22.04,11.47 19.86,7.56 15.38,7.49 18.43,4.21 17.11,-0.07 21.17,1.81 24.83,-0.77 24.30,3.68" fill="#ffefb8" stroke="#ffa024" stroke-width="0.75" stroke-linejoin="miter"/><polygon points="24.99,5.70 22.68,6.31 21.77,8.51 20.49,6.51 18.11,6.32 19.62,4.48 19.06,2.16 21.28,3.03 23.31,1.78 23.17,4.16" fill="#ffffff"/><polygon points="22.36,17.83 18.03,16.71 14.88,19.90 14.61,15.42 10.61,13.42 14.78,11.78 15.44,7.35 18.29,10.81 22.71,10.08 20.30,13.86" fill="#ffefb8" stroke="#ffa024" stroke-width="0.75" stroke-linejoin="miter"/><polygon points="20.04,15.98 17.70,15.52 15.92,17.12 15.64,14.75 13.57,13.55 15.73,12.55 16.23,10.22 17.86,11.96 20.23,11.72 19.07,13.80" fill="#ffffff"/><polygon points="12.41,25.77 8.99,22.87 4.77,24.38 6.47,20.24 3.73,16.69 8.20,17.03 10.72,13.33 11.79,17.68 16.09,18.94 12.28,21.29" fill="#ffefb8" stroke="#ffa024" stroke-width="0.75" stroke-linejoin="miter"/><polygon points="11.12,23.09 9.21,21.67 6.92,22.33 7.69,20.07 6.35,18.10 8.73,18.13 10.19,16.25 10.90,18.53 13.14,19.33 11.20,20.71" fill="#ffffff"/><polygon points="0.00,28.60 -1.82,24.51 -6.28,24.04 -2.95,21.04 -3.88,16.66 0.00,18.90 3.88,16.66 2.95,21.04 6.28,24.04 1.82,24.51" fill="none" stroke="#ffa024" stroke-width="0.75" opacity="0.35" stroke-linejoin="miter"/><polygon points="-12.41,25.77 -12.28,21.29 -16.09,18.94 -11.79,17.68 -10.72,13.33 -8.20,17.03 -3.73,16.69 -6.47,20.24 -4.77,24.38 -8.99,22.87" fill="none" stroke="#ffa024" stroke-width="0.75" opacity="0.35" stroke-linejoin="miter"/><polygon points="-22.36,17.83 -20.30,13.86 -22.71,10.08 -18.29,10.81 -15.44,7.35 -14.78,11.78 -10.61,13.42 -14.61,15.42 -14.88,19.90 -18.03,16.71" fill="none" stroke="#ffa024" stroke-width="0.75" opacity="0.35" stroke-linejoin="miter"/><polygon points="-27.88,6.36 -24.30,3.68 -24.83,-0.77 -21.17,1.81 -17.11,-0.07 -18.43,4.21 -15.38,7.49 -19.86,7.56 -22.04,11.47 -23.49,7.23" fill="none" stroke="#ffa024" stroke-width="0.75" opacity="0.35" stroke-linejoin="miter"/><polygon points="-27.88,-6.36 -23.49,-7.23 -22.04,-11.47 -19.86,-7.56 -15.38,-7.49 -18.43,-4.21 -17.11,0.07 -21.17,-1.81 -24.83,0.77 -24.30,-3.68" fill="none" stroke="#ffa024" stroke-width="0.75" opacity="0.35" stroke-linejoin="miter"/><polygon points="-22.36,-17.83 -18.03,-16.71 -14.88,-19.90 -14.61,-15.42 -10.61,-13.42 -14.78,-11.78 -15.44,-7.35 -18.29,-10.81 -22.71,-10.08 -20.30,-13.86" fill="none" stroke="#ffa024" stroke-width="0.75" opacity="0.35" stroke-linejoin="miter"/><polygon points="-12.41,-25.77 -8.99,-22.87 -4.77,-24.38 -6.47,-20.24 -3.73,-16.69 -8.20,-17.03 -10.72,-13.33 -11.79,-17.68 -16.09,-18.94 -12.28,-21.29" fill="none" stroke="#ffa024" stroke-width="0.75" opacity="0.35" stroke-linejoin="miter"/><polygon points="-0.00,-28.60 1.82,-24.51 6.28,-24.04 2.95,-21.04 3.88,-16.66 -0.00,-18.90 -3.88,-16.66 -2.95,-21.04 -6.28,-24.04 -1.82,-24.51" fill="none" stroke="#ffa024" stroke-width="0.75" opacity="0.35" stroke-linejoin="miter"/><polygon points="12.41,-25.77 12.28,-21.29 16.09,-18.94 11.79,-17.68 10.72,-13.33 8.20,-17.03 3.73,-16.69 6.47,-20.24 4.77,-24.38 8.99,-22.87" fill="none" stroke="#ffa024" stroke-width="0.75" opacity="0.35" stroke-linejoin="miter"/><polygon points="22.36,-17.83 20.30,-13.86 22.71,-10.08 18.29,-10.81 15.44,-7.35 14.78,-11.78 10.61,-13.42 14.61,-15.42 14.88,-19.90 18.03,-16.71" fill="none" stroke="#ffa024" stroke-width="0.75" opacity="0.35" stroke-linejoin="miter"/><polygon points="27.88,-6.36 24.30,-3.68 24.83,0.77 21.17,-1.81 17.11,0.07 18.43,-4.21 15.38,-7.49 19.86,-7.56 22.04,-11.47 23.49,-7.23" fill="none" stroke="#ffa024" stroke-width="0.75" opacity="0.35" stroke-linejoin="miter"/><polygon points="27.88,6.36 23.49,7.23 22.04,11.47 19.86,7.56 15.38,7.49 18.43,4.21 17.11,-0.07 21.17,1.81 24.83,-0.77 24.30,3.68" fill="none" stroke="#ffa024" stroke-width="0.75" opacity="0.35" stroke-linejoin="miter"/><polygon points="22.36,17.83 18.03,16.71 14.88,19.90 14.61,15.42 10.61,13.42 14.78,11.78 15.44,7.35 18.29,10.81 22.71,10.08 20.30,13.86" fill="none" stroke="#ffa024" stroke-width="0.75" opacity="0.35" stroke-linejoin="miter"/><polygon points="12.41,25.77 8.99,22.87 4.77,24.38 6.47,20.24 3.73,16.69 8.20,17.03 10.72,13.33 11.79,17.68 16.09,18.94 12.28,21.29" fill="none" stroke="#ffa024" stroke-width="0.75" opacity="0.35" stroke-linejoin="miter"/><polygon points="0.00,20.40 -1.94,16.67 -6.09,15.98 -3.14,12.98 -3.76,8.82 0.00,10.70 3.76,8.82 3.14,12.98 6.09,15.98 1.94,16.67" fill="#ffffff" stroke="#9c9c9c" stroke-width="0.8" stroke-linejoin="miter"/><polygon points="-8.85,18.38 -8.98,14.18 -12.42,11.75 -8.46,10.33 -7.22,6.32 -4.64,9.64 -0.44,9.58 -2.80,13.06 -1.45,17.04 -5.49,15.86" fill="#ffffff" stroke="#9c9c9c" stroke-width="0.8" stroke-linejoin="miter"/><polygon points="-15.95,12.72 -14.24,8.88 -16.29,5.20 -12.11,5.64 -9.24,2.56 -8.37,6.67 -4.55,8.44 -8.19,10.55 -8.70,14.72 -11.82,11.91" fill="#ffffff" stroke="#9c9c9c" stroke-width="0.8" stroke-linejoin="miter"/><polygon points="-19.89,4.54 -16.68,1.82 -16.93,-2.38 -13.35,-0.17 -9.44,-1.70 -10.43,2.38 -7.76,5.63 -11.96,5.95 -14.22,9.49 -15.82,5.60" fill="#ffffff" stroke="#9c9c9c" stroke-width="0.8" stroke-linejoin="miter"/><polygon points="-19.89,-4.54 -15.82,-5.60 -14.22,-9.49 -11.96,-5.95 -7.76,-5.63 -10.43,-2.38 -9.44,1.70 -13.35,0.17 -16.93,2.38 -16.68,-1.82" fill="#ffffff" stroke="#9c9c9c" stroke-width="0.8" stroke-linejoin="miter"/><polygon points="-15.95,-12.72 -11.82,-11.91 -8.70,-14.72 -8.19,-10.55 -4.55,-8.44 -8.37,-6.67 -9.24,-2.56 -12.11,-5.64 -16.29,-5.20 -14.24,-8.88" fill="#ffffff" stroke="#9c9c9c" stroke-width="0.8" stroke-linejoin="miter"/><polygon points="-8.85,-18.38 -5.49,-15.86 -1.45,-17.04 -2.80,-13.06 -0.44,-9.58 -4.64,-9.64 -7.22,-6.32 -8.46,-10.33 -12.42,-11.75 -8.98,-14.18" fill="#ffffff" stroke="#9c9c9c" stroke-width="0.8" stroke-linejoin="miter"/><polygon points="-0.00,-20.40 1.94,-16.67 6.09,-15.98 3.14,-12.98 3.76,-8.82 -0.00,-10.70 -3.76,-8.82 -3.14,-12.98 -6.09,-15.98 -1.94,-16.67" fill="#ffffff" stroke="#9c9c9c" stroke-width="0.8" stroke-linejoin="miter"/><polygon points="8.85,-18.38 8.98,-14.18 12.42,-11.75 8.46,-10.33 7.22,-6.32 4.64,-9.64 0.44,-9.58 2.80,-13.06 1.45,-17.04 5.49,-15.86" fill="#ffffff" stroke="#9c9c9c" stroke-width="0.8" stroke-linejoin="miter"/><polygon points="15.95,-12.72 14.24,-8.88 16.29,-5.20 12.11,-5.64 9.24,-2.56 8.37,-6.67 4.55,-8.44 8.19,-10.55 8.70,-14.72 11.82,-11.91" fill="#ffffff" stroke="#9c9c9c" stroke-width="0.8" stroke-linejoin="miter"/><polygon points="19.89,-4.54 16.68,-1.82 16.93,2.38 13.35,0.17 9.44,1.70 10.43,-2.38 7.76,-5.63 11.96,-5.95 14.22,-9.49 15.82,-5.60" fill="#ffffff" stroke="#9c9c9c" stroke-width="0.8" stroke-linejoin="miter"/><polygon points="19.89,4.54 15.82,5.60 14.22,9.49 11.96,5.95 7.76,5.63 10.43,2.38 9.44,-1.70 13.35,-0.17 16.93,-2.38 16.68,1.82" fill="#ffffff" stroke="#9c9c9c" stroke-width="0.8" stroke-linejoin="miter"/><polygon points="15.95,12.72 11.82,11.91 8.70,14.72 8.19,10.55 4.55,8.44 8.37,6.67 9.24,2.56 12.11,5.64 16.29,5.20 14.24,8.88" fill="#ffffff" stroke="#9c9c9c" stroke-width="0.8" stroke-linejoin="miter"/><polygon points="8.85,18.38 5.49,15.86 1.45,17.04 2.80,13.06 0.44,9.58 4.64,9.64 7.22,6.32 8.46,10.33 12.42,11.75 8.98,14.18" fill="#ffffff" stroke="#9c9c9c" stroke-width="0.8" stroke-linejoin="miter"/><polygon points="0.00,20.40 -1.94,16.67 -6.09,15.98 -3.14,12.98 -3.76,8.82 0.00,10.70 3.76,8.82 3.14,12.98 6.09,15.98 1.94,16.67" fill="none" stroke="#9c9c9c" stroke-width="0.8" opacity="0.6" stroke-linejoin="miter"/><polygon points="-8.85,18.38 -8.98,14.18 -12.42,11.75 -8.46,10.33 -7.22,6.32 -4.64,9.64 -0.44,9.58 -2.80,13.06 -1.45,17.04 -5.49,15.86" fill="none" stroke="#9c9c9c" stroke-width="0.8" opacity="0.6" stroke-linejoin="miter"/><polygon points="-15.95,12.72 -14.24,8.88 -16.29,5.20 -12.11,5.64 -9.24,2.56 -8.37,6.67 -4.55,8.44 -8.19,10.55 -8.70,14.72 -11.82,11.91" fill="none" stroke="#9c9c9c" stroke-width="0.8" opacity="0.6" stroke-linejoin="miter"/><polygon points="-19.89,4.54 -16.68,1.82 -16.93,-2.38 -13.35,-0.17 -9.44,-1.70 -10.43,2.38 -7.76,5.63 -11.96,5.95 -14.22,9.49 -15.82,5.60" fill="none" stroke="#9c9c9c" stroke-width="0.8" opacity="0.6" stroke-linejoin="miter"/><polygon points="-19.89,-4.54 -15.82,-5.60 -14.22,-9.49 -11.96,-5.95 -7.76,-5.63 -10.43,-2.38 -9.44,1.70 -13.35,0.17 -16.93,2.38 -16.68,-1.82" fill="none" stroke="#9c9c9c" stroke-width="0.8" opacity="0.6" stroke-linejoin="miter"/><polygon points="-15.95,-12.72 -11.82,-11.91 -8.70,-14.72 -8.19,-10.55 -4.55,-8.44 -8.37,-6.67 -9.24,-2.56 -12.11,-5.64 -16.29,-5.20 -14.24,-8.88" fill="none" stroke="#9c9c9c" stroke-width="0.8" opacity="0.6" stroke-linejoin="miter"/><polygon points="-8.85,-18.38 -5.49,-15.86 -1.45,-17.04 -2.80,-13.06 -0.44,-9.58 -4.64,-9.64 -7.22,-6.32 -8.46,-10.33 -12.42,-11.75 -8.98,-14.18" fill="none" stroke="#9c9c9c" stroke-width="0.8" opacity="0.6" stroke-linejoin="miter"/><polygon points="-0.00,-20.40 1.94,-16.67 6.09,-15.98 3.14,-12.98 3.76,-8.82 -0.00,-10.70 -3.76,-8.82 -3.14,-12.98 -6.09,-15.98 -1.94,-16.67" fill="none" stroke="#9c9c9c" stroke-width="0.8" opacity="0.6" stroke-linejoin="miter"/><polygon points="8.85,-18.38 8.98,-14.18 12.42,-11.75 8.46,-10.33 7.22,-6.32 4.64,-9.64 0.44,-9.58 2.80,-13.06 1.45,-17.04 5.49,-15.86" fill="none" stroke="#9c9c9c" stroke-width="0.8" opacity="0.6" stroke-linejoin="miter"/><polygon points="15.95,-12.72 14.24,-8.88 16.29,-5.20 12.11,-5.64 9.24,-2.56 8.37,-6.67 4.55,-8.44 8.19,-10.55 8.70,-14.72 11.82,-11.91" fill="none" stroke="#9c9c9c" stroke-width="0.8" opacity="0.6" stroke-linejoin="miter"/><polygon points="19.89,-4.54 16.68,-1.82 16.93,2.38 13.35,0.17 9.44,1.70 10.43,-2.38 7.76,-5.63 11.96,-5.95 14.22,-9.49 15.82,-5.60" fill="none" stroke="#9c9c9c" stroke-width="0.8" opacity="0.6" stroke-linejoin="miter"/><polygon points="19.89,4.54 15.82,5.60 14.22,9.49 11.96,5.95 7.76,5.63 10.43,2.38 9.44,-1.70 13.35,-0.17 16.93,-2.38 16.68,1.82" fill="none" stroke="#9c9c9c" stroke-width="0.8" opacity="0.6" stroke-linejoin="miter"/><polygon points="15.95,12.72 11.82,11.91 8.70,14.72 8.19,10.55 4.55,8.44 8.37,6.67 9.24,2.56 12.11,5.64 16.29,5.20 14.24,8.88" fill="none" stroke="#9c9c9c" stroke-width="0.8" opacity="0.6" stroke-linejoin="miter"/><polygon points="8.85,18.38 5.49,15.86 1.45,17.04 2.80,13.06 0.44,9.58 4.64,9.64 7.22,6.32 8.46,10.33 12.42,11.75 8.98,14.18" fill="none" stroke="#9c9c9c" stroke-width="0.8" opacity="0.6" stroke-linejoin="miter"/><circle r="9" fill="#fff"/><polygon points="-2.85,12.48 -3.68,8.99 -7.02,7.70 -3.96,5.83 -3.77,2.25 -1.05,4.58 2.42,3.66 1.04,6.97 2.99,9.98 -0.59,9.70" fill="#ffffff" stroke="#22f022" stroke-width="0.5" stroke-linejoin="miter"/><polygon points="-7.98,10.01 -7.22,6.50 -9.67,3.89 -6.10,3.53 -4.37,0.39 -2.93,3.67 0.59,4.35 -2.09,6.73 -1.64,10.29 -4.73,8.48" fill="#ffffff" stroke="#22f022" stroke-width="0.5" stroke-linejoin="miter"/><polygon points="-11.53,5.55 -9.32,2.73 -10.40,-0.69 -7.03,0.54 -4.11,-1.54 -4.23,2.04 -1.35,4.17 -4.80,5.16 -5.94,8.56 -7.95,5.59" fill="#ffffff" stroke="#22f022" stroke-width="0.5" stroke-linejoin="miter"/><polygon points="-12.80,0.00 -9.58,-1.59 -9.07,-5.14 -6.57,-2.57 -3.03,-3.17 -4.70,0.00 -3.03,3.17 -6.57,2.57 -9.07,5.14 -9.58,1.59" fill="#ffffff" stroke="#22f022" stroke-width="0.5" stroke-linejoin="miter"/><polygon points="-11.53,-5.55 -7.95,-5.59 -5.94,-8.56 -4.80,-5.16 -1.35,-4.17 -4.23,-2.04 -4.11,1.54 -7.03,-0.54 -10.40,0.69 -9.32,-2.73" fill="#ffffff" stroke="#22f022" stroke-width="0.5" stroke-linejoin="miter"/><polygon points="-7.98,-10.01 -4.73,-8.48 -1.64,-10.29 -2.09,-6.73 0.59,-4.35 -2.93,-3.67 -4.37,-0.39 -6.10,-3.53 -9.67,-3.89 -7.22,-6.50" fill="#ffffff" stroke="#22f022" stroke-width="0.5" stroke-linejoin="miter"/><polygon points="-2.85,-12.48 -0.59,-9.70 2.99,-9.98 1.04,-6.97 2.42,-3.66 -1.05,-4.58 -3.77,-2.25 -3.96,-5.83 -7.02,-7.70 -3.68,-8.99" fill="#ffffff" stroke="#22f022" stroke-width="0.5" stroke-linejoin="miter"/><polygon points="2.85,-12.48 3.68,-8.99 7.02,-7.70 3.96,-5.83 3.77,-2.25 1.05,-4.58 -2.42,-3.66 -1.04,-6.97 -2.99,-9.98 0.59,-9.70" fill="#ffffff" stroke="#22f022" stroke-width="0.5" stroke-linejoin="miter"/><polygon points="7.98,-10.01 7.22,-6.50 9.67,-3.89 6.10,-3.53 4.37,-0.39 2.93,-3.67 -0.59,-4.35 2.09,-6.73 1.64,-10.29 4.73,-8.48" fill="#ffffff" stroke="#22f022" stroke-width="0.5" stroke-linejoin="miter"/><polygon points="11.53,-5.55 9.32,-2.73 10.40,0.69 7.03,-0.54 4.11,1.54 4.23,-2.04 1.35,-4.17 4.80,-5.16 5.94,-8.56 7.95,-5.59" fill="#ffffff" stroke="#22f022" stroke-width="0.5" stroke-linejoin="miter"/><polygon points="12.80,-0.00 9.58,1.59 9.07,5.14 6.57,2.57 3.03,3.17 4.70,-0.00 3.03,-3.17 6.57,-2.57 9.07,-5.14 9.58,-1.59" fill="#ffffff" stroke="#22f022" stroke-width="0.5" stroke-linejoin="miter"/><polygon points="11.53,5.55 7.95,5.59 5.94,8.56 4.80,5.16 1.35,4.17 4.23,2.04 4.11,-1.54 7.03,0.54 10.40,-0.69 9.32,2.73" fill="#ffffff" stroke="#22f022" stroke-width="0.5" stroke-linejoin="miter"/><polygon points="7.98,10.01 4.73,8.48 1.64,10.29 2.09,6.73 -0.59,4.35 2.93,3.67 4.37,0.39 6.10,3.53 9.67,3.89 7.22,6.50" fill="#ffffff" stroke="#22f022" stroke-width="0.5" stroke-linejoin="miter"/><polygon points="2.85,12.48 0.59,9.70 -2.99,9.98 -1.04,6.97 -2.42,3.66 1.05,4.58 3.77,2.25 3.96,5.83 7.02,7.70 3.68,8.99" fill="#ffffff" stroke="#22f022" stroke-width="0.5" stroke-linejoin="miter"/><polygon points="-2.85,12.48 -3.68,8.99 -7.02,7.70 -3.96,5.83 -3.77,2.25 -1.05,4.58 2.42,3.66 1.04,6.97 2.99,9.98 -0.59,9.70" fill="none" stroke="#22f022" stroke-width="0.5" opacity="1.0" stroke-linejoin="miter"/><polygon points="-7.98,10.01 -7.22,6.50 -9.67,3.89 -6.10,3.53 -4.37,0.39 -2.93,3.67 0.59,4.35 -2.09,6.73 -1.64,10.29 -4.73,8.48" fill="none" stroke="#22f022" stroke-width="0.5" opacity="1.0" stroke-linejoin="miter"/><polygon points="-11.53,5.55 -9.32,2.73 -10.40,-0.69 -7.03,0.54 -4.11,-1.54 -4.23,2.04 -1.35,4.17 -4.80,5.16 -5.94,8.56 -7.95,5.59" fill="none" stroke="#22f022" stroke-width="0.5" opacity="1.0" stroke-linejoin="miter"/><polygon points="-12.80,0.00 -9.58,-1.59 -9.07,-5.14 -6.57,-2.57 -3.03,-3.17 -4.70,0.00 -3.03,3.17 -6.57,2.57 -9.07,5.14 -9.58,1.59" fill="none" stroke="#22f022" stroke-width="0.5" opacity="1.0" stroke-linejoin="miter"/><polygon points="-11.53,-5.55 -7.95,-5.59 -5.94,-8.56 -4.80,-5.16 -1.35,-4.17 -4.23,-2.04 -4.11,1.54 -7.03,-0.54 -10.40,0.69 -9.32,-2.73" fill="none" stroke="#22f022" stroke-width="0.5" opacity="1.0" stroke-linejoin="miter"/><polygon points="-7.98,-10.01 -4.73,-8.48 -1.64,-10.29 -2.09,-6.73 0.59,-4.35 -2.93,-3.67 -4.37,-0.39 -6.10,-3.53 -9.67,-3.89 -7.22,-6.50" fill="none" stroke="#22f022" stroke-width="0.5" opacity="1.0" stroke-linejoin="miter"/><polygon points="-2.85,-12.48 -0.59,-9.70 2.99,-9.98 1.04,-6.97 2.42,-3.66 -1.05,-4.58 -3.77,-2.25 -3.96,-5.83 -7.02,-7.70 -3.68,-8.99" fill="none" stroke="#22f022" stroke-width="0.5" opacity="1.0" stroke-linejoin="miter"/><polygon points="2.85,-12.48 3.68,-8.99 7.02,-7.70 3.96,-5.83 3.77,-2.25 1.05,-4.58 -2.42,-3.66 -1.04,-6.97 -2.99,-9.98 0.59,-9.70" fill="none" stroke="#22f022" stroke-width="0.5" opacity="1.0" stroke-linejoin="miter"/><polygon points="7.98,-10.01 7.22,-6.50 9.67,-3.89 6.10,-3.53 4.37,-0.39 2.93,-3.67 -0.59,-4.35 2.09,-6.73 1.64,-10.29 4.73,-8.48" fill="none" stroke="#22f022" stroke-width="0.5" opacity="1.0" stroke-linejoin="miter"/><polygon points="11.53,-5.55 9.32,-2.73 10.40,0.69 7.03,-0.54 4.11,1.54 4.23,-2.04 1.35,-4.17 4.80,-5.16 5.94,-8.56 7.95,-5.59" fill="none" stroke="#22f022" stroke-width="0.5" opacity="1.0" stroke-linejoin="miter"/><polygon points="12.80,-0.00 9.58,1.59 9.07,5.14 6.57,2.57 3.03,3.17 4.70,-0.00 3.03,-3.17 6.57,-2.57 9.07,-5.14 9.58,-1.59" fill="none" stroke="#22f022" stroke-width="0.5" opacity="1.0" stroke-linejoin="miter"/><polygon points="11.53,5.55 7.95,5.59 5.94,8.56 4.80,5.16 1.35,4.17 4.23,2.04 4.11,-1.54 7.03,0.54 10.40,-0.69 9.32,2.73" fill="none" stroke="#22f022" stroke-width="0.5" opacity="1.0" stroke-linejoin="miter"/><polygon points="7.98,10.01 4.73,8.48 1.64,10.29 2.09,6.73 -0.59,4.35 2.93,3.67 4.37,0.39 6.10,3.53 9.67,3.89 7.22,6.50" fill="none" stroke="#22f022" stroke-width="0.5" opacity="1.0" stroke-linejoin="miter"/><polygon points="2.85,12.48 0.59,9.70 -2.99,9.98 -1.04,6.97 -2.42,3.66 1.05,4.58 3.77,2.25 3.96,5.83 7.02,7.70 3.68,8.99" fill="none" stroke="#22f022" stroke-width="0.5" opacity="1.0" stroke-linejoin="miter"/><circle r="1.8" fill="#000"/></g></g><rect x="130" y="150" width="27" height="1" fill="#e8e8e8"/><rect x="143" y="138" width="1" height="23.5" fill="#e8e8e8"/><ellipse cx="144" cy="258.5" rx="3.3" ry="3" fill="#ff2a2a" filter="url(#gs)"/><ellipse cx="144" cy="258.5" rx="1.7" ry="1.5" fill="#fff"/></svg>
</div></body></html>
